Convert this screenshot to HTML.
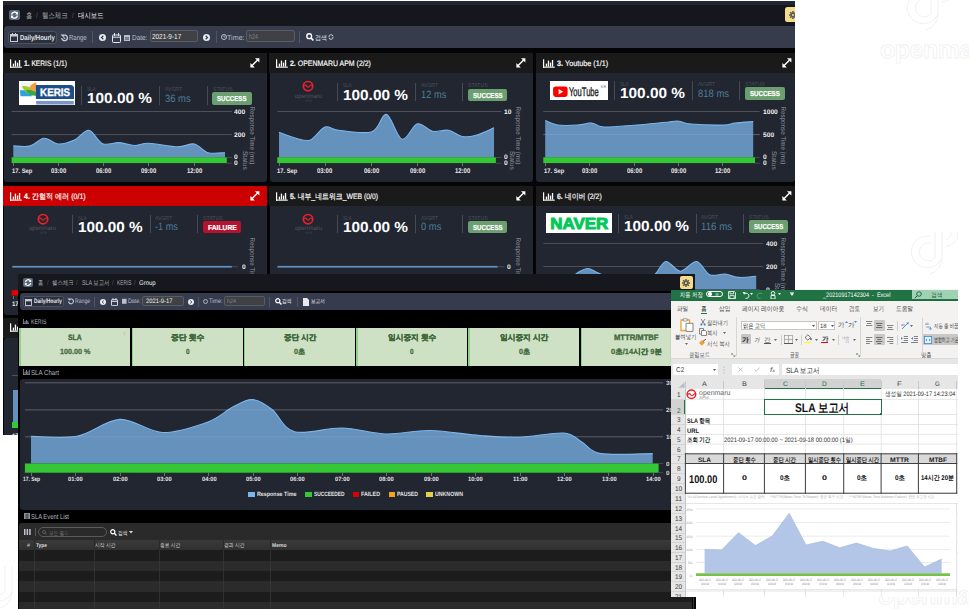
<!DOCTYPE html>
<html><head><meta charset="utf-8"><title>SLA</title>
<style>
*{margin:0;padding:0;box-sizing:border-box}
html,body{width:969px;height:609px;overflow:hidden;background:#fff}
body{position:relative;font-family:"Liberation Sans",sans-serif;text-rendering:geometricPrecision}
.a{position:absolute;display:block}
.t{position:absolute;white-space:nowrap;line-height:1}
.o{transform-origin:0 50%}
</style></head><body>
<svg class="a" style="left:904.00px;top:-12.00px;" width="50" height="48" viewBox="0 0 50 48"><g transform="scale(1.0)" fill="none" stroke="#eeeeee" stroke-width="0.9"><path d="M22,4 A16,16 0 1 0 34,26 V0"/><path d="M22,11 A9,9 0 1 0 27,26 V0"/><path d="M27,0 V-2 M34,26 A16,16 0 0 1 22,42"/><path d="M38,14 A12,12 0 0 0 38,-10"/><path d="M38,7 A5,5 0 0 0 38,-3"/></g></svg>
<div class="t" style="left:880px;top:38px;font-size:25px;font-weight:700;color:transparent;-webkit-text-stroke:0.8px #f0f0f0;letter-spacing:-0.5px">openmaru</div>
<svg class="a" style="left:908.00px;top:232.00px;" width="50" height="48" viewBox="0 0 50 48"><g transform="scale(1.0)" fill="none" stroke="#eeeeee" stroke-width="0.9"><path d="M22,4 A16,16 0 1 0 34,26 V0"/><path d="M22,11 A9,9 0 1 0 27,26 V0"/><path d="M27,0 V-2 M34,26 A16,16 0 0 1 22,42"/><path d="M38,14 A12,12 0 0 0 38,-10"/><path d="M38,7 A5,5 0 0 0 38,-3"/></g></svg>
<div class="t" style="left:878px;top:584px;font-size:25px;font-weight:700;color:transparent;-webkit-text-stroke:0.8px #f0f0f0;letter-spacing:-0.5px">openmaru</div>
<svg class="a" style="left:-22.00px;top:566.00px;" width="50" height="48" viewBox="0 0 50 48"><g transform="scale(1.0)" fill="none" stroke="#eeeeee" stroke-width="0.9"><path d="M22,4 A16,16 0 1 0 34,26 V0"/><path d="M22,11 A9,9 0 1 0 27,26 V0"/><path d="M27,0 V-2 M34,26 A16,16 0 0 1 22,42"/><path d="M38,14 A12,12 0 0 0 38,-10"/><path d="M38,7 A5,5 0 0 0 38,-3"/></g></svg>
<div class="a" style="left:0;top:0;width:795px;height:435px;overflow:hidden">
<div class="a" style="left:3.00px;top:1.00px;width:792.00px;height:434.00px;background:#050507;"></div>
<div class="a" style="left:3.00px;top:1.00px;width:792.00px;height:25.00px;background:#15171c;"></div>
<div class="a" style="left:3.00px;top:1.00px;width:792.00px;height:3.70px;background:#222630;"></div>
<div class="a" style="left:9.00px;top:9.50px;width:11.00px;height:10.20px;background:#5c667a;border-radius:2px;"></div>
<svg class="a" style="left:9.00px;top:9.50px;" width="11" height="10" viewBox="0 0 11 10"><g fill="none" stroke="#fff" stroke-width="1.3"><path d="M2.6,4.6 A3,3 0 0 1 8.2,3.6"/><path d="M8.4,5.6 A3,3 0 0 1 2.8,6.6"/></g><path d="M9,1.8 L9,4.6 L6.3,4.4 Z" fill="#fff"/><path d="M2,8.4 L2,5.6 L4.7,5.8 Z" fill="#fff"/></svg>
<div class="t o" style="left:26.00px;top:11.67px;font-size:7.6px;color:#a6abb3;transform:scaleX(1.088);--w:6.20;">홈</div>
<div class="t o" style="left:35.50px;top:11.67px;font-size:7.6px;color:#5b606a;transform:scaleX(0.853);--w:1.80;">/</div>
<div class="t o" style="left:42.00px;top:11.67px;font-size:7.6px;color:#a6abb3;transform:scaleX(1.127);--w:25.70;">헬스체크</div>
<div class="t o" style="left:71.50px;top:11.67px;font-size:7.6px;color:#5b606a;transform:scaleX(0.853);--w:1.80;">/</div>
<div class="t o" style="left:77.60px;top:11.67px;font-size:7.6px;color:#eceef2;transform:scaleX(1.123);--w:25.60;">대시보드</div>
<div class="a" style="left:785.10px;top:6.90px;width:10.00px;height:15.30px;background:#f5dc8a;border-radius:2.5px 0 0 2.5px;"></div>
<svg class="a" style="left:789.20px;top:10.90px;" width="8" height="8" viewBox="0 0 8 8"><rect x="3.25" y="0" width="1.5" height="2.40" fill="#5a5a5a" transform="rotate(0 4.0 4.0)"/><rect x="3.25" y="0" width="1.5" height="2.40" fill="#5a5a5a" transform="rotate(45 4.0 4.0)"/><rect x="3.25" y="0" width="1.5" height="2.40" fill="#5a5a5a" transform="rotate(90 4.0 4.0)"/><rect x="3.25" y="0" width="1.5" height="2.40" fill="#5a5a5a" transform="rotate(135 4.0 4.0)"/><rect x="3.25" y="0" width="1.5" height="2.40" fill="#5a5a5a" transform="rotate(180 4.0 4.0)"/><rect x="3.25" y="0" width="1.5" height="2.40" fill="#5a5a5a" transform="rotate(225 4.0 4.0)"/><rect x="3.25" y="0" width="1.5" height="2.40" fill="#5a5a5a" transform="rotate(270 4.0 4.0)"/><rect x="3.25" y="0" width="1.5" height="2.40" fill="#5a5a5a" transform="rotate(315 4.0 4.0)"/><circle cx="4.0" cy="4.0" r="2.40" fill="#5a5a5a"/><circle cx="4.0" cy="4.0" r="1.04" fill="#f5dc8a"/></svg>
<div class="a" style="left:4.30px;top:26.10px;width:790.70px;height:21.60px;background:#363c4c;border-radius:3px 0 0 3px;"></div>
<div class="a" style="left:7.50px;top:30.80px;width:49.00px;height:13.00px;background:#2b303c;border:1px solid #4b5162;border-radius:3px;"></div>
<svg class="a" style="left:9.80px;top:32.60px;" width="8" height="9" viewBox="0 0 8 9"><g fill="none" stroke="#c9cdd6" stroke-width="1"><rect x="0.5" y="1.5" width="7" height="7"/></g><rect x="0.5" y="1.5" width="7" height="2" fill="#c9cdd6"/><rect x="2" y="0" width="1" height="2" fill="#c9cdd6"/><rect x="5" y="0" width="1" height="2" fill="#c9cdd6"/></svg>
<div class="t o" style="left:19.50px;top:33.67px;font-size:7.3px;color:#e4e7ee;transform:scaleX(0.815);--w:34.70;font-weight:700;">Daily/Hourly</div>
<svg class="a" style="left:60.00px;top:33.50px;" width="8" height="8" viewBox="0 0 8 8"><path d="M1.8,4 A2.8,2.8 0 1 0 3,1.6" fill="none" stroke="#c9cdd6" stroke-width="1.3"/><path d="M0.4,0.6 L3.8,0.6 L3.6,3.6 Z" fill="#c9cdd6"/><path d="M4,2.6 V4.3 H5.4" fill="none" stroke="#c9cdd6" stroke-width="0.9"/></svg>
<div class="t o" style="left:69.00px;top:33.67px;font-size:7.3px;color:#b9bec8;transform:scaleX(0.823);--w:17.70;">Range</div>
<div class="a" style="left:92.20px;top:31.00px;width:0.90px;height:12.00px;background:#4f5566;"></div>
<svg class="a" style="left:99.20px;top:34.20px;" width="7" height="7" viewBox="0 0 7 7"><circle cx="3.5" cy="3.5" r="3.5" fill="#e9ebf0"/><path d="M4.3,1.8 L2.5,3.5 L4.3,5.2" fill="none" stroke="#363c4c" stroke-width="1.2"/></svg>
<svg class="a" style="left:112.00px;top:32.60px;" width="9" height="10" viewBox="0 0 9 10"><g fill="none" stroke="#e6e8ee" stroke-width="1"><rect x="0.5" y="2" width="8" height="7.5" rx="0.8"/><path d="M2.5,0 V3 M6.5,0 V3 M0.5,4.2 H8.5"/></g></svg>
<svg class="a" style="left:124.40px;top:33.80px;" width="6" height="7" viewBox="0 0 6 7"><rect x="0" y="1" width="6" height="6" fill="#b9bec8"/><rect x="1" y="3" width="4" height="3" fill="#363c4c" opacity="0.5"/></svg>
<div class="t o" style="left:132.30px;top:33.67px;font-size:7.3px;color:#b9bec8;transform:scaleX(0.883);--w:15.40;">Date:</div>
<div class="a" style="left:149.60px;top:30.10px;width:48.20px;height:11.70px;background:#3f4145;border:1px solid #5a5c62;border-radius:2px;"></div>
<div class="t o" style="left:151.90px;top:32.97px;font-size:7.3px;color:#eceef0;transform:scaleX(0.877);--w:29.20;">2021-9-17</div>
<svg class="a" style="left:202.80px;top:33.80px;" width="7" height="7" viewBox="0 0 7 7"><circle cx="3.5" cy="3.5" r="3.5" fill="#e9ebf0"/><path d="M2.7,1.8 L4.5,3.5 L2.7,5.2" fill="none" stroke="#363c4c" stroke-width="1.2"/></svg>
<div class="a" style="left:215.70px;top:31.00px;width:0.90px;height:12.00px;background:#4f5566;"></div>
<svg class="a" style="left:221.00px;top:34.20px;" width="6" height="6" viewBox="0 0 6 6"><circle cx="3" cy="3" r="2.5" fill="none" stroke="#b9bec8" stroke-width="1"/><path d="M3,1.5 V3 H4.3" fill="none" stroke="#b9bec8" stroke-width="0.8"/></svg>
<div class="t o" style="left:227.00px;top:33.67px;font-size:7.3px;color:#b9bec8;transform:scaleX(0.979);--w:17.60;">Time:</div>
<div class="a" style="left:246.00px;top:30.10px;width:48.80px;height:11.70px;background:#3f4145;border:1px solid #5a5c62;border-radius:2px;"></div>
<div class="t o" style="left:248.80px;top:32.97px;font-size:7.3px;color:#7d8087;transform:scaleX(0.731);--w:8.90;">h24</div>
<div class="a" style="left:298.80px;top:31.00px;width:0.90px;height:12.00px;background:#4f5566;"></div>
<svg class="a" style="left:305.80px;top:33.20px;" width="8" height="8" viewBox="0 0 8 8"><circle cx="3.2" cy="3.2" r="2.4" fill="none" stroke="#fff" stroke-width="1.4"/><path d="M4.9,4.9 L7.4,7.4" stroke="#fff" stroke-width="1.6"/></svg>
<div class="t o" style="left:314.90px;top:35.67px;font-size:6.6px;color:#e8eaee;transform:scaleX(1.212);--w:12.00;">검색</div>
<svg class="a" style="left:328.00px;top:34.00px;" width="6" height="6" viewBox="0 0 6 6"><path d="M1,3 A2,2 0 0 1 5,2.4 M5,3 A2,2 0 0 1 1,3.6" fill="none" stroke="#c9cdd6" stroke-width="1"/></svg>
<div class="a" style="left:3.00px;top:52.60px;width:264.00px;height:20.20px;background:#1a1a1a;"></div>
<div class="a" style="left:3.50px;top:72.80px;width:263.00px;height:109.70px;background:#222631;border-radius:0 0 3px 3px;"></div>
<div class="a" style="left:269.00px;top:52.60px;width:264.00px;height:20.20px;background:#1a1a1a;"></div>
<div class="a" style="left:269.50px;top:72.80px;width:263.00px;height:109.70px;background:#222631;border-radius:0 0 3px 3px;"></div>
<div class="a" style="left:535.50px;top:52.60px;width:259.50px;height:20.20px;background:#1a1a1a;"></div>
<div class="a" style="left:536.00px;top:72.80px;width:258.50px;height:109.70px;background:#222631;border-radius:0 0 3px 3px;"></div>
<svg class="a" style="left:10.00px;top:58.60px;" width="12" height="9" viewBox="0 0 12 9"><g fill="#fff"><rect x="0" y="0.3" width="1.2" height="8.4"/><rect x="0" y="7.6" width="11.8" height="1.1"/><rect x="2.8" y="4.6" width="1.3" height="3"/><rect x="4.8" y="1.6" width="1.3" height="6"/><rect x="6.9" y="3.6" width="1.3" height="4"/><rect x="8.9" y="1" width="1.3" height="6.6"/></g></svg>
<div class="t o" style="left:24.30px;top:59.87px;font-size:7.9px;color:#f4f4f4;transform:scaleX(0.842);-webkit-text-stroke:0.2px #f4f4f4;--w:42.90;"><b>1. </b>KERIS (1/1)</div>
<svg class="a" style="left:276.00px;top:58.60px;" width="12" height="9" viewBox="0 0 12 9"><g fill="#fff"><rect x="0" y="0.3" width="1.2" height="8.4"/><rect x="0" y="7.6" width="11.8" height="1.1"/><rect x="2.8" y="4.6" width="1.3" height="3"/><rect x="4.8" y="1.6" width="1.3" height="6"/><rect x="6.9" y="3.6" width="1.3" height="4"/><rect x="8.9" y="1" width="1.3" height="6.6"/></g></svg>
<div class="t o" style="left:290.30px;top:59.87px;font-size:7.9px;color:#f4f4f4;transform:scaleX(0.882);-webkit-text-stroke:0.2px #f4f4f4;--w:80.90;"><b>2. </b>OPENMARU APM (2/2)</div>
<svg class="a" style="left:542.50px;top:58.60px;" width="12" height="9" viewBox="0 0 12 9"><g fill="#fff"><rect x="0" y="0.3" width="1.2" height="8.4"/><rect x="0" y="7.6" width="11.8" height="1.1"/><rect x="2.8" y="4.6" width="1.3" height="3"/><rect x="4.8" y="1.6" width="1.3" height="6"/><rect x="6.9" y="3.6" width="1.3" height="4"/><rect x="8.9" y="1" width="1.3" height="6.6"/></g></svg>
<div class="t o" style="left:556.80px;top:59.87px;font-size:7.9px;color:#f4f4f4;transform:scaleX(0.916);-webkit-text-stroke:0.2px #f4f4f4;--w:51.20;"><b>3. </b>Youtube (1/1)</div>
<svg class="a" style="left:250.20px;top:58.20px;" width="10" height="10" viewBox="0 0 10 10"><g fill="#fff"><path d="M9.4,0.2 L9.4,4.6 L5,0.2 Z"/><path d="M0.4,9.4 L0.4,5 L4.8,9.4 Z"/><path d="M7.4,1.2 L8.4,2.2 L2.4,8.2 L1.4,7.2 Z"/></g></svg>
<svg class="a" style="left:516.40px;top:58.20px;" width="10" height="10" viewBox="0 0 10 10"><g fill="#fff"><path d="M9.4,0.2 L9.4,4.6 L5,0.2 Z"/><path d="M0.4,9.4 L0.4,5 L4.8,9.4 Z"/><path d="M7.4,1.2 L8.4,2.2 L2.4,8.2 L1.4,7.2 Z"/></g></svg>
<svg class="a" style="left:782.00px;top:58.20px;" width="10" height="10" viewBox="0 0 10 10"><g fill="#fff"><path d="M9.4,0.2 L9.4,4.6 L5,0.2 Z"/><path d="M0.4,9.4 L0.4,5 L4.8,9.4 Z"/><path d="M7.4,1.2 L8.4,2.2 L2.4,8.2 L1.4,7.2 Z"/></g></svg>
<div class="a" style="left:18.90px;top:80.90px;width:56.10px;height:24.00px;background:#fff;"></div>
<svg class="a" style="left:18.90px;top:80.90px;" width="57" height="25" viewBox="0 0 57 25"><rect x="1.5" y="1.2" width="15.5" height="12.5" rx="2" fill="#f2f4f2"/><path d="M0.8,9.2 H11 L13,15.2 H1.5 Z" fill="#2aa3dc"/><path d="M3,5.2 C7,4.6 11,6 13.5,9 L12.5,13.6 C8.5,13.5 5,10 3,5.2Z" fill="#9ccc2e"/><path d="M6.5,9.5 C10,8.6 14,9.2 17,11 L17,14.8 C12.5,15 9,13 6.5,9.5Z" fill="#3aa845"/><path d="M10.2,6.5 C12,3.5 14.5,1.8 17.3,1.2 L17.3,10.5 C14,10.2 11.5,9 10.2,6.5Z" fill="#f0a040"/><path d="M16.9,4.1 H51.5 Q55,4.1 55,7.6 V17.9 H16.9 Z" fill="#1c4f8a"/><text x="36.1" y="15" text-anchor="middle" font-family="Liberation Sans" font-weight="700" font-size="11" fill="#fff" stroke="#fff" stroke-width="0.35" textLength="30" lengthAdjust="spacingAndGlyphs">KERIS</text><rect x="17.2" y="19.9" width="37.6" height="3.6" fill="#5a7bb8" opacity="0.8"/></svg>
<div class="a" style="left:81.10px;top:86.00px;width:1.10px;height:19.00px;background:#454a55;"></div>
<div class="a" style="left:159.10px;top:86.00px;width:1.10px;height:19.00px;background:#454a55;"></div>
<div class="a" style="left:207.10px;top:86.00px;width:1.10px;height:19.00px;background:#454a55;"></div>
<div class="t o" style="left:87.40px;top:88.01px;font-size:5.8px;color:#4b505b;transform:scaleX(0.794);--w:8.70;">SLA</div>
<div class="t o" style="left:164.70px;top:88.01px;font-size:5.8px;color:#4b505b;transform:scaleX(0.874);--w:17.00;">AVGRT</div>
<div class="t o" style="left:212.70px;top:88.01px;font-size:5.8px;color:#4b505b;transform:scaleX(0.890);--w:19.60;">STATUS</div>
<div class="t o" style="left:87.40px;top:92.18px;font-size:14.6px;color:#fff;transform:scaleX(1.054);--w:65.00;font-weight:700;">100.00 %</div>
<div class="t o" style="left:164.70px;top:93.67px;font-size:10.6px;color:#4c7f98;transform:scaleX(0.890);--w:25.70;">36 ms</div>
<div class="a" style="left:212.40px;top:91.90px;width:39.30px;height:13.00px;background:#6b9f6f;border-radius:2px;"></div>
<div class="t o" style="left:217.31px;top:95.27px;font-size:7.2px;color:#fff;transform:scaleX(0.847);--w:29.47;font-weight:700;-webkit-text-stroke:0.2px #fff;">SUCCESS</div>
<svg class="a" style="left:302.40px;top:80.10px;" width="13" height="13" viewBox="0 0 13 13"><g transform="scale(1.0)"><circle cx="6" cy="6.2" r="4.7" fill="none" stroke="#e8212b" stroke-width="1.7"/><path d="M2.3,6 C3.1,4.9 3.9,4.8 4.6,5.9 S6.6,7.9 7.6,6.3 S9.1,4.9 9.8,5.5" fill="none" stroke="#e8212b" stroke-width="1.1"/></g></svg>
<div class="t o" style="left:294.80px;top:93.67px;font-size:6.2px;color:#50555e;transform:scaleX(0.974);--w:27.20;">openmaru</div>
<div class="t o" style="left:305.00px;top:99.52px;font-size:3.6px;color:#40444c;transform:scaleX(0.872);--w:6.80;">APM</div>
<div class="a" style="left:336.80px;top:82.50px;width:1.10px;height:18.80px;background:#454a55;"></div>
<div class="a" style="left:415.00px;top:82.50px;width:1.10px;height:18.80px;background:#454a55;"></div>
<div class="a" style="left:462.00px;top:82.50px;width:1.10px;height:18.80px;background:#454a55;"></div>
<div class="t o" style="left:343.10px;top:84.41px;font-size:5.8px;color:#4b505b;transform:scaleX(0.794);--w:8.70;">SLA</div>
<div class="t o" style="left:420.60px;top:84.41px;font-size:5.8px;color:#4b505b;transform:scaleX(0.874);--w:17.00;">AVGRT</div>
<div class="t o" style="left:467.60px;top:84.41px;font-size:5.8px;color:#4b505b;transform:scaleX(0.890);--w:19.60;">STATUS</div>
<div class="t o" style="left:343.10px;top:88.58px;font-size:14.6px;color:#fff;transform:scaleX(1.052);--w:64.90;font-weight:700;">100.00 %</div>
<div class="t o" style="left:420.60px;top:90.07px;font-size:10.6px;color:#4c7f98;transform:scaleX(0.877);--w:25.30;">12 ms</div>
<div class="a" style="left:468.00px;top:88.70px;width:39.40px;height:12.60px;background:#6b9f6f;border-radius:2px;"></div>
<div class="t o" style="left:472.93px;top:91.67px;font-size:7.2px;color:#fff;transform:scaleX(0.849);--w:29.55;font-weight:700;-webkit-text-stroke:0.2px #fff;">SUCCESS</div>
<div class="a" style="left:549.50px;top:81.30px;width:58.40px;height:18.70px;background:#fff;"></div>
<svg class="a" style="left:549.50px;top:81.30px;" width="59" height="19" viewBox="0 0 59 19"><rect x="3.1" y="5.6" width="14.5" height="10.3" rx="2.8" fill="#ff0000"/><path d="M8.6,8 L13.2,10.7 L8.6,13.4Z" fill="#fff"/><text x="19" y="14.9" font-family="Liberation Sans" font-size="12.3" fill="#1a1a1a" stroke="#1a1a1a" stroke-width="0.35" textLength="29.8" lengthAdjust="spacingAndGlyphs">YouTube</text><text x="50.8" y="7.3" font-family="Liberation Sans" font-size="3.9" fill="#777">KR</text></svg>
<div class="a" style="left:614.00px;top:81.00px;width:1.10px;height:19.00px;background:#454a55;"></div>
<div class="a" style="left:692.00px;top:81.00px;width:1.10px;height:19.00px;background:#454a55;"></div>
<div class="a" style="left:739.40px;top:81.00px;width:1.10px;height:19.00px;background:#454a55;"></div>
<div class="t o" style="left:620.30px;top:83.01px;font-size:5.8px;color:#4b505b;transform:scaleX(0.794);--w:8.70;">SLA</div>
<div class="t o" style="left:697.60px;top:83.01px;font-size:5.8px;color:#4b505b;transform:scaleX(0.874);--w:17.00;">AVGRT</div>
<div class="t o" style="left:745.00px;top:83.01px;font-size:5.8px;color:#4b505b;transform:scaleX(0.890);--w:19.60;">STATUS</div>
<div class="t o" style="left:620.30px;top:87.18px;font-size:14.6px;color:#fff;transform:scaleX(1.054);--w:65.00;font-weight:700;">100.00 %</div>
<div class="t o" style="left:697.60px;top:88.67px;font-size:10.6px;color:#4c7f98;transform:scaleX(0.892);--w:31.00;">818 ms</div>
<div class="a" style="left:745.30px;top:86.80px;width:39.70px;height:13.10px;background:#6b9f6f;border-radius:2px;"></div>
<div class="t o" style="left:750.26px;top:90.27px;font-size:7.2px;color:#fff;transform:scaleX(0.855);--w:29.78;font-weight:700;-webkit-text-stroke:0.2px #fff;">SUCCESS</div>
<svg class="a" style="left:0;top:0" width="969" height="609"><rect x="11.6" y="111.0" width="220.3" height="1" fill="#4e5159"/><rect x="11.6" y="134.1" width="220.3" height="1" fill="#4e5159"/><path d="M13.30,145.90 C16.13,145.90 25.18,147.18 30.30,145.90 C35.42,144.62 39.30,138.52 44.00,138.20 C48.70,137.88 53.33,143.75 58.50,144.00 C63.67,144.25 69.93,141.98 75.00,139.70 C80.07,137.42 84.30,129.63 88.90,130.30 C93.50,130.97 97.55,141.65 102.60,143.70 C107.65,145.75 113.90,142.30 119.20,142.60 C124.50,142.90 129.47,145.38 134.40,145.50 C139.33,145.62 141.58,143.07 148.80,143.30 C156.02,143.53 170.12,146.78 177.70,146.90 C185.28,147.02 189.25,143.03 194.30,144.00 C199.35,144.97 202.88,151.25 208.00,152.70 C213.12,154.15 222.17,152.70 225.00,152.70 L225.00,157.50 L13.30,157.50 Z" fill="#6591bd"/><path d="M13.30,145.90 C16.13,145.90 25.18,147.18 30.30,145.90 C35.42,144.62 39.30,138.52 44.00,138.20 C48.70,137.88 53.33,143.75 58.50,144.00 C63.67,144.25 69.93,141.98 75.00,139.70 C80.07,137.42 84.30,129.63 88.90,130.30 C93.50,130.97 97.55,141.65 102.60,143.70 C107.65,145.75 113.90,142.30 119.20,142.60 C124.50,142.90 129.47,145.38 134.40,145.50 C139.33,145.62 141.58,143.07 148.80,143.30 C156.02,143.53 170.12,146.78 177.70,146.90 C185.28,147.02 189.25,143.03 194.30,144.00 C199.35,144.97 202.88,151.25 208.00,152.70 C213.12,154.15 222.17,152.70 225.00,152.70" fill="none" stroke="#7cb5ec" stroke-width="1.1"/><rect x="11.6" y="157.3" width="215.2" height="5.8" fill="#34c934"/><rect x="226.8" y="157" width="5" height="0.8" fill="#4e5159"/><rect x="226.8" y="162.8" width="5" height="0.8" fill="#4e5159"/><rect x="277.3" y="111" width="223.9" height="1" fill="#4e5159"/><path d="M279.00,132.20 C281.83,133.20 290.75,136.90 296.00,138.20 C301.25,139.50 305.67,141.87 310.50,140.00 C315.33,138.13 320.30,128.62 325.00,127.00 C329.70,125.38 330.87,129.52 338.70,130.30 C346.53,131.08 364.05,134.35 372.00,131.70 C379.95,129.05 381.40,113.15 386.40,114.40 C391.40,115.65 396.83,137.63 402.00,139.20 C407.17,140.77 412.30,125.12 417.40,123.80 C422.50,122.48 427.42,130.22 432.60,131.30 C437.78,132.38 443.57,129.43 448.50,130.30 C453.43,131.17 457.62,135.67 462.20,136.50 C466.78,137.33 470.70,136.75 476.00,135.30 C481.30,133.85 491.00,129.05 494.00,127.80 L494.00,157.50 L279.00,157.50 Z" fill="#6591bd"/><path d="M279.00,132.20 C281.83,133.20 290.75,136.90 296.00,138.20 C301.25,139.50 305.67,141.87 310.50,140.00 C315.33,138.13 320.30,128.62 325.00,127.00 C329.70,125.38 330.87,129.52 338.70,130.30 C346.53,131.08 364.05,134.35 372.00,131.70 C379.95,129.05 381.40,113.15 386.40,114.40 C391.40,115.65 396.83,137.63 402.00,139.20 C407.17,140.77 412.30,125.12 417.40,123.80 C422.50,122.48 427.42,130.22 432.60,131.30 C437.78,132.38 443.57,129.43 448.50,130.30 C453.43,131.17 457.62,135.67 462.20,136.50 C466.78,137.33 470.70,136.75 476.00,135.30 C481.30,133.85 491.00,129.05 494.00,127.80" fill="none" stroke="#7cb5ec" stroke-width="1.1"/><rect x="277.3" y="157.3" width="218.6" height="5.8" fill="#34c934"/><rect x="495.9" y="157" width="5.3" height="0.8" fill="#4e5159"/><rect x="495.9" y="162.8" width="5.3" height="0.8" fill="#4e5159"/><rect x="543.3" y="111.0" width="216.4" height="1" fill="#4e5159"/><rect x="543.3" y="134.1" width="216.4" height="1" fill="#4e5159"/><path d="M545.20,120.60 C547.25,121.33 552.08,124.27 557.50,125.00 C562.92,125.73 572.42,125.33 577.70,125.00 C582.98,124.67 586.55,123.25 589.20,123.00 C591.85,122.75 591.18,122.83 593.60,123.50 C596.02,124.17 596.97,126.72 603.70,127.00 C610.43,127.28 623.17,126.03 634.00,125.20 C644.83,124.37 661.23,122.67 668.70,122.00 C676.17,121.33 675.08,120.87 678.80,121.20 C682.52,121.53 683.53,123.37 691.00,124.00 C698.47,124.63 716.27,125.17 723.60,125.00 C730.93,124.83 730.07,123.57 735.00,123.00 C739.93,122.43 750.17,121.83 753.20,121.60 L753.20,157.50 L545.20,157.50 Z" fill="#6591bd"/><path d="M545.20,120.60 C547.25,121.33 552.08,124.27 557.50,125.00 C562.92,125.73 572.42,125.33 577.70,125.00 C582.98,124.67 586.55,123.25 589.20,123.00 C591.85,122.75 591.18,122.83 593.60,123.50 C596.02,124.17 596.97,126.72 603.70,127.00 C610.43,127.28 623.17,126.03 634.00,125.20 C644.83,124.37 661.23,122.67 668.70,122.00 C676.17,121.33 675.08,120.87 678.80,121.20 C682.52,121.53 683.53,123.37 691.00,124.00 C698.47,124.63 716.27,125.17 723.60,125.00 C730.93,124.83 730.07,123.57 735.00,123.00 C739.93,122.43 750.17,121.83 753.20,121.60" fill="none" stroke="#7cb5ec" stroke-width="1.1"/><rect x="543.3" y="134.1" width="216.4" height="1" fill="#fff" opacity="0.1"/><rect x="543.3" y="157.3" width="211.7" height="5.8" fill="#34c934"/><rect x="755" y="157" width="4.7" height="0.8" fill="#4e5159"/><rect x="755" y="162.8" width="4.7" height="0.8" fill="#4e5159"/></svg>
<div class="a" style="left:12.90px;top:163.10px;width:0.80px;height:3.00px;background:#6b6f78;"></div>
<div class="t o" style="left:11.70px;top:168.87px;font-size:6.6px;color:#e8e8e8;transform:scaleX(0.878);--w:20.30;font-weight:700;">17. Sep</div>
<div class="a" style="left:58.10px;top:163.10px;width:0.80px;height:3.00px;background:#6b6f78;"></div>
<div class="t o" style="left:50.90px;top:168.87px;font-size:6.8px;color:#e8e8e8;transform:scaleX(0.874);--w:15.20;font-weight:700;">03:00</div>
<div class="a" style="left:103.10px;top:163.10px;width:0.80px;height:3.00px;background:#6b6f78;"></div>
<div class="t o" style="left:95.90px;top:168.87px;font-size:6.8px;color:#e8e8e8;transform:scaleX(0.874);--w:15.20;font-weight:700;">06:00</div>
<div class="a" style="left:148.40px;top:163.10px;width:0.80px;height:3.00px;background:#6b6f78;"></div>
<div class="t o" style="left:141.20px;top:168.87px;font-size:6.8px;color:#e8e8e8;transform:scaleX(0.874);--w:15.20;font-weight:700;">09:00</div>
<div class="a" style="left:193.90px;top:163.10px;width:0.80px;height:3.00px;background:#6b6f78;"></div>
<div class="t o" style="left:186.70px;top:168.87px;font-size:6.8px;color:#e8e8e8;transform:scaleX(0.874);--w:15.20;font-weight:700;">12:00</div>
<div class="a" style="left:278.60px;top:163.10px;width:0.80px;height:3.00px;background:#6b6f78;"></div>
<div class="t o" style="left:277.40px;top:168.87px;font-size:6.6px;color:#e8e8e8;transform:scaleX(0.878);--w:20.30;font-weight:700;">17. Sep</div>
<div class="a" style="left:324.60px;top:163.10px;width:0.80px;height:3.00px;background:#6b6f78;"></div>
<div class="t o" style="left:317.40px;top:168.87px;font-size:6.8px;color:#e8e8e8;transform:scaleX(0.874);--w:15.20;font-weight:700;">03:00</div>
<div class="a" style="left:371.10px;top:163.10px;width:0.80px;height:3.00px;background:#6b6f78;"></div>
<div class="t o" style="left:363.90px;top:168.87px;font-size:6.8px;color:#e8e8e8;transform:scaleX(0.874);--w:15.20;font-weight:700;">06:00</div>
<div class="a" style="left:417.00px;top:163.10px;width:0.80px;height:3.00px;background:#6b6f78;"></div>
<div class="t o" style="left:409.80px;top:168.87px;font-size:6.8px;color:#e8e8e8;transform:scaleX(0.874);--w:15.20;font-weight:700;">09:00</div>
<div class="a" style="left:461.80px;top:163.10px;width:0.80px;height:3.00px;background:#6b6f78;"></div>
<div class="t o" style="left:454.60px;top:168.87px;font-size:6.8px;color:#e8e8e8;transform:scaleX(0.874);--w:15.20;font-weight:700;">12:00</div>
<div class="a" style="left:544.80px;top:163.10px;width:0.80px;height:3.00px;background:#6b6f78;"></div>
<div class="t o" style="left:543.60px;top:168.87px;font-size:6.6px;color:#e8e8e8;transform:scaleX(0.878);--w:20.30;font-weight:700;">17. Sep</div>
<div class="a" style="left:589.00px;top:163.10px;width:0.80px;height:3.00px;background:#6b6f78;"></div>
<div class="t o" style="left:581.80px;top:168.87px;font-size:6.8px;color:#e8e8e8;transform:scaleX(0.874);--w:15.20;font-weight:700;">03:00</div>
<div class="a" style="left:633.90px;top:163.10px;width:0.80px;height:3.00px;background:#6b6f78;"></div>
<div class="t o" style="left:626.70px;top:168.87px;font-size:6.8px;color:#e8e8e8;transform:scaleX(0.874);--w:15.20;font-weight:700;">06:00</div>
<div class="a" style="left:678.40px;top:163.10px;width:0.80px;height:3.00px;background:#6b6f78;"></div>
<div class="t o" style="left:671.20px;top:168.87px;font-size:6.8px;color:#e8e8e8;transform:scaleX(0.874);--w:15.20;font-weight:700;">09:00</div>
<div class="a" style="left:722.30px;top:163.10px;width:0.80px;height:3.00px;background:#6b6f78;"></div>
<div class="t o" style="left:715.10px;top:168.87px;font-size:6.8px;color:#e8e8e8;transform:scaleX(0.874);--w:15.20;font-weight:700;">12:00</div>
<div class="t o" style="left:234.00px;top:109.97px;font-size:6.6px;color:#eeeeee;transform:scaleX(1.008);--w:11.10;font-weight:700;">400</div>
<div class="t o" style="left:234.00px;top:133.07px;font-size:6.6px;color:#eeeeee;transform:scaleX(1.008);--w:11.10;font-weight:700;">200</div>
<div class="t o" style="left:234.00px;top:154.97px;font-size:6.6px;color:#eeeeee;transform:scaleX(1.008);--w:3.70;font-weight:700;">0</div>
<div class="t o" style="left:234.00px;top:160.67px;font-size:6.6px;color:#eeeeee;transform:scaleX(1.008);--w:3.70;font-weight:700;">0</div>
<div class="t o" style="left:503.70px;top:109.97px;font-size:6.6px;color:#eeeeee;transform:scaleX(1.008);--w:7.40;font-weight:700;">10</div>
<div class="t o" style="left:503.70px;top:154.97px;font-size:6.6px;color:#eeeeee;transform:scaleX(1.008);--w:3.70;font-weight:700;">0</div>
<div class="t o" style="left:503.70px;top:160.67px;font-size:6.6px;color:#eeeeee;transform:scaleX(1.008);--w:3.70;font-weight:700;">0</div>
<div class="t o" style="left:762.90px;top:109.97px;font-size:6.6px;color:#eeeeee;transform:scaleX(1.008);--w:14.80;font-weight:700;">1000</div>
<div class="t o" style="left:762.90px;top:133.07px;font-size:6.6px;color:#eeeeee;transform:scaleX(1.008);--w:11.10;font-weight:700;">500</div>
<div class="t o" style="left:762.90px;top:154.97px;font-size:6.6px;color:#eeeeee;transform:scaleX(1.008);--w:3.70;font-weight:700;">0</div>
<div class="t o" style="left:762.90px;top:160.67px;font-size:6.6px;color:#eeeeee;transform:scaleX(1.008);--w:3.70;font-weight:700;">0</div>
<div class="t" style="left:50.70px;top:131.60px;width:400px;text-align:center;font-size:6.8px;line-height:6.8px;color:#8e939c;transform:rotate(90deg) scaleX(0.925);">Response Time (ms)</div>
<div class="t" style="left:44.00px;top:156.60px;width:400px;text-align:center;font-size:6.8px;line-height:6.8px;color:#8e939c;transform:rotate(90deg) scaleX(0.986);">Status</div>
<div class="t" style="left:316.50px;top:131.60px;width:400px;text-align:center;font-size:6.8px;line-height:6.8px;color:#8e939c;transform:rotate(90deg) scaleX(0.925);">Response Time (ms)</div>
<div class="t" style="left:310.50px;top:156.60px;width:400px;text-align:center;font-size:6.8px;line-height:6.8px;color:#8e939c;transform:rotate(90deg) scaleX(0.986);">Status</div>
<div class="t" style="left:582.20px;top:131.60px;width:400px;text-align:center;font-size:6.8px;line-height:6.8px;color:#8e939c;transform:rotate(90deg) scaleX(0.925);">Response Time (ms)</div>
<div class="t" style="left:573.40px;top:156.60px;width:400px;text-align:center;font-size:6.8px;line-height:6.8px;color:#8e939c;transform:rotate(90deg) scaleX(0.986);">Status</div>
<div class="a" style="left:3.00px;top:185.50px;width:264.00px;height:20.20px;background:#cc0000;"></div>
<div class="a" style="left:3.50px;top:205.70px;width:263.00px;height:109.70px;background:#222631;border-radius:0 0 3px 3px;"></div>
<div class="a" style="left:269.00px;top:185.50px;width:264.00px;height:20.20px;background:#1a1a1a;"></div>
<div class="a" style="left:269.50px;top:205.70px;width:263.00px;height:109.70px;background:#222631;border-radius:0 0 3px 3px;"></div>
<div class="a" style="left:535.50px;top:185.50px;width:259.50px;height:20.20px;background:#1a1a1a;"></div>
<div class="a" style="left:536.00px;top:205.70px;width:258.50px;height:109.70px;background:#222631;border-radius:0 0 3px 3px;"></div>
<svg class="a" style="left:10.00px;top:191.50px;" width="12" height="9" viewBox="0 0 12 9"><g fill="#fff"><rect x="0" y="0.3" width="1.2" height="8.4"/><rect x="0" y="7.6" width="11.8" height="1.1"/><rect x="2.8" y="4.6" width="1.3" height="3"/><rect x="4.8" y="1.6" width="1.3" height="6"/><rect x="6.9" y="3.6" width="1.3" height="4"/><rect x="8.9" y="1" width="1.3" height="6.6"/></g></svg>
<div class="t o" style="left:24.30px;top:192.77px;font-size:7.9px;color:#f4f4f4;transform:scaleX(1.045);-webkit-text-stroke:0.2px #f4f4f4;--w:61.70;"><b>4. </b>간헐적 에러 (0/1)</div>
<svg class="a" style="left:276.00px;top:191.50px;" width="12" height="9" viewBox="0 0 12 9"><g fill="#fff"><rect x="0" y="0.3" width="1.2" height="8.4"/><rect x="0" y="7.6" width="11.8" height="1.1"/><rect x="2.8" y="4.6" width="1.3" height="3"/><rect x="4.8" y="1.6" width="1.3" height="6"/><rect x="6.9" y="3.6" width="1.3" height="4"/><rect x="8.9" y="1" width="1.3" height="6.6"/></g></svg>
<div class="t o" style="left:290.30px;top:192.77px;font-size:7.9px;color:#f4f4f4;transform:scaleX(0.984);-webkit-text-stroke:0.2px #f4f4f4;--w:88.10;"><b>5. </b>내부_네트워크_WEB (0/0)</div>
<svg class="a" style="left:542.50px;top:191.50px;" width="12" height="9" viewBox="0 0 12 9"><g fill="#fff"><rect x="0" y="0.3" width="1.2" height="8.4"/><rect x="0" y="7.6" width="11.8" height="1.1"/><rect x="2.8" y="4.6" width="1.3" height="3"/><rect x="4.8" y="1.6" width="1.3" height="6"/><rect x="6.9" y="3.6" width="1.3" height="4"/><rect x="8.9" y="1" width="1.3" height="6.6"/></g></svg>
<div class="t o" style="left:556.80px;top:192.77px;font-size:7.9px;color:#f4f4f4;transform:scaleX(0.993);-webkit-text-stroke:0.2px #f4f4f4;--w:44.70;"><b>6. </b>네이버 (2/2)</div>
<svg class="a" style="left:250.20px;top:191.20px;" width="10" height="10" viewBox="0 0 10 10"><g fill="#fff"><path d="M9.4,0.2 L9.4,4.6 L5,0.2 Z"/><path d="M0.4,9.4 L0.4,5 L4.8,9.4 Z"/><path d="M7.4,1.2 L8.4,2.2 L2.4,8.2 L1.4,7.2 Z"/></g></svg>
<svg class="a" style="left:516.40px;top:191.20px;" width="10" height="10" viewBox="0 0 10 10"><g fill="#fff"><path d="M9.4,0.2 L9.4,4.6 L5,0.2 Z"/><path d="M0.4,9.4 L0.4,5 L4.8,9.4 Z"/><path d="M7.4,1.2 L8.4,2.2 L2.4,8.2 L1.4,7.2 Z"/></g></svg>
<svg class="a" style="left:782.00px;top:191.20px;" width="10" height="10" viewBox="0 0 10 10"><g fill="#fff"><path d="M9.4,0.2 L9.4,4.6 L5,0.2 Z"/><path d="M0.4,9.4 L0.4,5 L4.8,9.4 Z"/><path d="M7.4,1.2 L8.4,2.2 L2.4,8.2 L1.4,7.2 Z"/></g></svg>
<svg class="a" style="left:37.00px;top:212.70px;" width="13" height="13" viewBox="0 0 13 13"><g transform="scale(1.0)"><circle cx="6" cy="6.2" r="4.7" fill="none" stroke="#e8212b" stroke-width="1.7"/><path d="M2.3,6 C3.1,4.9 3.9,4.8 4.6,5.9 S6.6,7.9 7.6,6.3 S9.1,4.9 9.8,5.5" fill="none" stroke="#e8212b" stroke-width="1.1"/></g></svg>
<div class="t o" style="left:29.40px;top:226.27px;font-size:6.2px;color:#50555e;transform:scaleX(0.974);--w:27.20;">openmaru</div>
<div class="t o" style="left:39.60px;top:232.12px;font-size:3.6px;color:#40444c;transform:scaleX(0.872);--w:6.80;">APM</div>
<div class="a" style="left:71.80px;top:214.70px;width:1.10px;height:18.80px;background:#454a55;"></div>
<div class="a" style="left:149.50px;top:214.70px;width:1.10px;height:18.80px;background:#454a55;"></div>
<div class="a" style="left:197.00px;top:214.70px;width:1.10px;height:18.80px;background:#454a55;"></div>
<div class="t o" style="left:78.10px;top:216.61px;font-size:5.8px;color:#4b505b;transform:scaleX(0.794);--w:8.70;">SLA</div>
<div class="t o" style="left:155.10px;top:216.61px;font-size:5.8px;color:#4b505b;transform:scaleX(0.874);--w:17.00;">AVGRT</div>
<div class="t o" style="left:202.60px;top:216.61px;font-size:5.8px;color:#4b505b;transform:scaleX(0.890);--w:19.60;">STATUS</div>
<div class="t o" style="left:78.10px;top:220.78px;font-size:14.6px;color:#fff;transform:scaleX(1.047);--w:64.60;font-weight:700;">100.00 %</div>
<div class="t o" style="left:155.10px;top:222.27px;font-size:10.6px;color:#4c7f98;transform:scaleX(0.864);--w:22.90;">-1 ms</div>
<div class="a" style="left:203.00px;top:221.20px;width:38.30px;height:12.30px;background:#b5122f;border-radius:2px;"></div>
<div class="t o" style="left:207.79px;top:223.87px;font-size:7.2px;color:#fff;transform:scaleX(0.933);--w:28.73;font-weight:700;-webkit-text-stroke:0.2px #fff;">FAILURE</div>
<svg class="a" style="left:302.40px;top:212.70px;" width="13" height="13" viewBox="0 0 13 13"><g transform="scale(1.0)"><circle cx="6" cy="6.2" r="4.7" fill="none" stroke="#e8212b" stroke-width="1.7"/><path d="M2.3,6 C3.1,4.9 3.9,4.8 4.6,5.9 S6.6,7.9 7.6,6.3 S9.1,4.9 9.8,5.5" fill="none" stroke="#e8212b" stroke-width="1.1"/></g></svg>
<div class="t o" style="left:294.80px;top:226.27px;font-size:6.2px;color:#50555e;transform:scaleX(0.974);--w:27.20;">openmaru</div>
<div class="t o" style="left:305.00px;top:232.12px;font-size:3.6px;color:#40444c;transform:scaleX(0.872);--w:6.80;">APM</div>
<div class="a" style="left:336.80px;top:214.70px;width:1.10px;height:18.80px;background:#454a55;"></div>
<div class="a" style="left:415.00px;top:214.70px;width:1.10px;height:18.80px;background:#454a55;"></div>
<div class="a" style="left:462.00px;top:214.70px;width:1.10px;height:18.80px;background:#454a55;"></div>
<div class="t o" style="left:343.10px;top:216.61px;font-size:5.8px;color:#4b505b;transform:scaleX(0.794);--w:8.70;">SLA</div>
<div class="t o" style="left:420.60px;top:216.61px;font-size:5.8px;color:#4b505b;transform:scaleX(0.874);--w:17.00;">AVGRT</div>
<div class="t o" style="left:467.60px;top:216.61px;font-size:5.8px;color:#4b505b;transform:scaleX(0.890);--w:19.60;">STATUS</div>
<div class="t o" style="left:343.10px;top:220.78px;font-size:14.6px;color:#fff;transform:scaleX(1.052);--w:64.90;font-weight:700;">100.00 %</div>
<div class="t o" style="left:420.60px;top:222.27px;font-size:10.6px;color:#4c7f98;transform:scaleX(0.888);--w:20.40;">0 ms</div>
<div class="a" style="left:468.00px;top:221.20px;width:39.40px;height:12.30px;background:#6b9f6f;border-radius:2px;"></div>
<div class="t o" style="left:472.93px;top:223.87px;font-size:7.2px;color:#fff;transform:scaleX(0.849);--w:29.55;font-weight:700;-webkit-text-stroke:0.2px #fff;">SUCCESS</div>
<div class="a" style="left:545.90px;top:213.00px;width:66.20px;height:19.70px;background:#fff;"></div>
<svg class="a" style="left:545.90px;top:213.00px;" width="67" height="20" viewBox="0 0 67 20"><text x="33.2" y="16.3" text-anchor="middle" font-family="Liberation Sans" font-weight="700" font-size="16" fill="#03c75a" stroke="#03c75a" stroke-width="1" textLength="58" lengthAdjust="spacingAndGlyphs">NAVER</text></svg>
<div class="a" style="left:617.70px;top:214.00px;width:1.10px;height:18.70px;background:#454a55;"></div>
<div class="a" style="left:695.60px;top:214.00px;width:1.10px;height:18.70px;background:#454a55;"></div>
<div class="a" style="left:743.30px;top:214.00px;width:1.10px;height:18.70px;background:#454a55;"></div>
<div class="t o" style="left:624.00px;top:215.91px;font-size:5.8px;color:#4b505b;transform:scaleX(0.794);--w:8.70;">SLA</div>
<div class="t o" style="left:701.20px;top:215.91px;font-size:5.8px;color:#4b505b;transform:scaleX(0.874);--w:17.00;">AVGRT</div>
<div class="t o" style="left:748.90px;top:215.91px;font-size:5.8px;color:#4b505b;transform:scaleX(0.890);--w:19.60;">STATUS</div>
<div class="t o" style="left:624.00px;top:220.08px;font-size:14.6px;color:#fff;transform:scaleX(1.052);--w:64.90;font-weight:700;">100.00 %</div>
<div class="t o" style="left:701.20px;top:221.57px;font-size:10.6px;color:#4c7f98;transform:scaleX(0.915);--w:31.10;">116 ms</div>
<div class="a" style="left:749.30px;top:220.20px;width:39.00px;height:12.50px;background:#6b9f6f;border-radius:2px;"></div>
<div class="t o" style="left:754.17px;top:223.07px;font-size:7.2px;color:#fff;transform:scaleX(0.840);--w:29.25;font-weight:700;-webkit-text-stroke:0.2px #fff;">SUCCESS</div>
<svg class="a" style="left:0;top:0" width="969" height="609"><rect x="12.3" y="265.9" width="219.6" height="1.7" fill="#6591bd"/><rect x="231.9" y="266.3" width="6" height="0.9" fill="#4e5159"/><rect x="277.5" y="265.9" width="220.2" height="1.7" fill="#6591bd"/><rect x="497.7" y="266.3" width="6.9" height="0.9" fill="#4e5159"/><rect x="11.6" y="290" width="7" height="5.6" fill="#dd0000"/><rect x="543.3" y="242.9" width="220" height="1" fill="#4e5159"/><rect x="543.3" y="266.0" width="220" height="1" fill="#4e5159"/><path d="M545.20,283.00 C548.50,282.67 559.40,282.83 565.00,281.00 C570.60,279.17 574.97,274.08 578.80,272.00 C582.63,269.92 584.75,268.33 588.00,268.50 C591.25,268.67 592.97,270.75 598.30,273.00 C603.63,275.25 612.22,280.67 620.00,282.00 C627.78,283.33 639.10,282.33 645.00,281.00 C650.90,279.67 651.90,277.25 655.40,274.00 C658.90,270.75 661.82,261.97 666.00,261.50 C670.18,261.03 675.40,271.20 680.50,271.20 C685.60,271.20 691.73,260.90 696.60,261.50 C701.47,262.10 704.97,272.72 709.70,274.80 C714.43,276.88 720.12,273.57 725.00,274.00 C729.88,274.43 733.80,277.03 739.00,277.40 C744.20,277.77 753.33,276.40 756.20,276.20 L756.20,289.60 L545.20,289.60 Z" fill="#6591bd"/><path d="M545.20,283.00 C548.50,282.67 559.40,282.83 565.00,281.00 C570.60,279.17 574.97,274.08 578.80,272.00 C582.63,269.92 584.75,268.33 588.00,268.50 C591.25,268.67 592.97,270.75 598.30,273.00 C603.63,275.25 612.22,280.67 620.00,282.00 C627.78,283.33 639.10,282.33 645.00,281.00 C650.90,279.67 651.90,277.25 655.40,274.00 C658.90,270.75 661.82,261.97 666.00,261.50 C670.18,261.03 675.40,271.20 680.50,271.20 C685.60,271.20 691.73,260.90 696.60,261.50 C701.47,262.10 704.97,272.72 709.70,274.80 C714.43,276.88 720.12,273.57 725.00,274.00 C729.88,274.43 733.80,277.03 739.00,277.40 C744.20,277.77 753.33,276.40 756.20,276.20" fill="none" stroke="#7cb5ec" stroke-width="1.1"/><rect x="543.3" y="290.2" width="211.7" height="5.8" fill="#34c934"/><rect x="755" y="289" width="4.7" height="0.8" fill="#4e5159"/></svg>
<div class="t o" style="left:242.30px;top:265.37px;font-size:6.6px;color:#eeeeee;transform:scaleX(1.008);--w:3.70;font-weight:700;">0</div>
<div class="t o" style="left:507.00px;top:265.37px;font-size:6.6px;color:#eeeeee;transform:scaleX(1.008);--w:3.70;font-weight:700;">0</div>
<div class="t o" style="left:11.80px;top:301.57px;font-size:6.6px;color:#e8e8e8;transform:scaleX(0.913);--w:6.70;font-weight:700;">17</div>
<div class="a" style="left:13.30px;top:295.60px;width:0.80px;height:3.00px;background:#6b6f78;"></div>
<div class="t o" style="left:766.20px;top:242.07px;font-size:6.6px;color:#eeeeee;transform:scaleX(1.008);--w:11.10;font-weight:700;">400</div>
<div class="t o" style="left:766.20px;top:265.17px;font-size:6.6px;color:#eeeeee;transform:scaleX(1.008);--w:11.10;font-weight:700;">200</div>
<div class="t o" style="left:766.20px;top:287.67px;font-size:6.6px;color:#eeeeee;transform:scaleX(1.035);--w:3.80;font-weight:700;">0</div>
<div class="t" style="left:50.70px;top:263.10px;width:400px;text-align:center;font-size:6.8px;line-height:6.8px;color:#8e939c;transform:rotate(90deg) scaleX(0.925);">Response Time (ms)</div>
<div class="t" style="left:316.50px;top:263.10px;width:400px;text-align:center;font-size:6.8px;line-height:6.8px;color:#8e939c;transform:rotate(90deg) scaleX(0.925);">Response Time (ms)</div>
<div class="t" style="left:582.20px;top:263.10px;width:400px;text-align:center;font-size:6.8px;line-height:6.8px;color:#8e939c;transform:rotate(90deg) scaleX(0.925);">Response Time (ms)</div>
<div class="t" style="left:576.00px;top:288.60px;width:400px;text-align:center;font-size:6.8px;line-height:6.8px;color:#8e939c;transform:rotate(90deg) scaleX(0.986);">Status</div>
<div class="a" style="left:3.00px;top:317.60px;width:264.00px;height:20.20px;background:#1a1a1a;"></div>
<div class="a" style="left:3.50px;top:337.80px;width:263.00px;height:97.20px;background:#222631;border-radius:3px 3px 0 0;"></div>
<svg class="a" style="left:9.90px;top:323.30px;" width="12" height="9" viewBox="0 0 12 9"><g fill="#fff"><rect x="0" y="0.3" width="1.2" height="8.4"/><rect x="0" y="7.6" width="11.8" height="1.1"/><rect x="2.8" y="4.6" width="1.3" height="3"/><rect x="4.8" y="1.6" width="1.3" height="6"/><rect x="6.9" y="3.6" width="1.3" height="4"/><rect x="8.9" y="1" width="1.3" height="6.6"/></g></svg>
<div class="a" style="left:12.00px;top:375.20px;width:10.00px;height:0.90px;background:#4e5159;"></div>
<div class="a" style="left:13.00px;top:390.00px;width:5.00px;height:32.50px;background:#6591bd;"></div>
<div class="a" style="left:12.00px;top:422.00px;width:7.00px;height:5.50px;background:#34c934;"></div>
<div class="t o" style="left:11.80px;top:433.87px;font-size:6.6px;color:#e8e8e8;transform:scaleX(0.913);--w:6.70;font-weight:700;">17</div>
</div>
<div class="a" style="left:0;top:0;width:695.5px;height:609px;overflow:hidden">
<div class="a" style="left:18.20px;top:274.00px;width:677.30px;height:335.00px;background:#000;"></div>
<div class="a" style="left:18.20px;top:274.00px;width:677.30px;height:17.40px;background:#16181d;"></div>
<div class="a" style="left:23.40px;top:277.90px;width:10.10px;height:9.10px;background:#5c667a;border-radius:2px;"></div>
<svg class="a" style="left:23.40px;top:277.90px;" width="10" height="9" viewBox="0 0 10 9"><g fill="none" stroke="#fff" stroke-width="1.2"><path d="M2.4,4.2 A2.7,2.7 0 0 1 7.5,3.2"/><path d="M7.7,5 A2.7,2.7 0 0 1 2.6,6"/></g><path d="M8.2,1.5 L8.2,4.1 L5.8,3.9 Z" fill="#fff"/><path d="M1.8,7.6 L1.8,5 L4.2,5.2 Z" fill="#fff"/></svg>
<div class="t o" style="left:38.30px;top:280.67px;font-size:6.8px;color:#a6abb3;transform:scaleX(1.000);--w:5.10;">홈</div>
<div class="t o" style="left:46.50px;top:280.67px;font-size:6.8px;color:#5b606a;transform:scaleX(0.794);--w:1.50;">/</div>
<div class="t o" style="left:52.00px;top:280.67px;font-size:6.8px;color:#a6abb3;transform:scaleX(1.064);--w:21.70;">헬스체크</div>
<div class="t o" style="left:76.00px;top:280.67px;font-size:6.8px;color:#5b606a;transform:scaleX(0.794);--w:1.50;">/</div>
<div class="t o" style="left:81.60px;top:280.67px;font-size:6.8px;color:#a6abb3;transform:scaleX(0.927);--w:27.50;">SLA 보고서</div>
<div class="t o" style="left:112.20px;top:280.67px;font-size:6.8px;color:#5b606a;transform:scaleX(0.794);--w:1.50;">/</div>
<div class="t o" style="left:117.00px;top:280.67px;font-size:6.8px;color:#a6abb3;transform:scaleX(0.711);--w:14.50;">KERIS</div>
<div class="t o" style="left:133.90px;top:280.67px;font-size:6.8px;color:#5b606a;transform:scaleX(0.794);--w:1.50;">/</div>
<div class="t o" style="left:139.40px;top:280.67px;font-size:6.8px;color:#eceef2;transform:scaleX(0.878);--w:16.60;">Group</div>
<div class="a" style="left:679.80px;top:276.00px;width:13.20px;height:13.00px;background:#f5dc8a;border-radius:2px;"></div>
<svg class="a" style="left:682.40px;top:278.50px;" width="8" height="8" viewBox="0 0 8 8"><rect x="3.25" y="0" width="1.5" height="2.40" fill="#5a5a5a" transform="rotate(0 4.0 4.0)"/><rect x="3.25" y="0" width="1.5" height="2.40" fill="#5a5a5a" transform="rotate(45 4.0 4.0)"/><rect x="3.25" y="0" width="1.5" height="2.40" fill="#5a5a5a" transform="rotate(90 4.0 4.0)"/><rect x="3.25" y="0" width="1.5" height="2.40" fill="#5a5a5a" transform="rotate(135 4.0 4.0)"/><rect x="3.25" y="0" width="1.5" height="2.40" fill="#5a5a5a" transform="rotate(180 4.0 4.0)"/><rect x="3.25" y="0" width="1.5" height="2.40" fill="#5a5a5a" transform="rotate(225 4.0 4.0)"/><rect x="3.25" y="0" width="1.5" height="2.40" fill="#5a5a5a" transform="rotate(270 4.0 4.0)"/><rect x="3.25" y="0" width="1.5" height="2.40" fill="#5a5a5a" transform="rotate(315 4.0 4.0)"/><circle cx="4.0" cy="4.0" r="2.40" fill="#5a5a5a"/><circle cx="4.0" cy="4.0" r="1.04" fill="#f5dc8a"/></svg>
<div class="a" style="left:19.70px;top:292.50px;width:675.80px;height:17.70px;background:#363c4d;border-radius:3px 0 0 3px;"></div>
<div class="a" style="left:23.10px;top:296.40px;width:40.50px;height:10.80px;background:#2b303c;border:1px solid #4b5162;border-radius:2px;"></div>
<svg class="a" style="left:25.00px;top:297.80px;" width="7" height="8" viewBox="0 0 7 8"><g fill="none" stroke="#c9cdd6" stroke-width="0.9"><rect x="0.5" y="1.5" width="6" height="6"/></g><rect x="0.5" y="1.5" width="6" height="1.8" fill="#c9cdd6"/></svg>
<div class="t o" style="left:33.60px;top:299.47px;font-size:6.4px;color:#e4e7ee;transform:scaleX(0.747);--w:27.90;font-weight:700;">Daily/Hourly</div>
<svg class="a" style="left:67.20px;top:298.20px;" width="7" height="7" viewBox="0 0 7 7"><path d="M1.6,3.5 A2.4,2.4 0 1 0 2.6,1.4" fill="none" stroke="#c9cdd6" stroke-width="1.1"/><path d="M0.3,0.5 L3.3,0.5 L3.1,3.1 Z" fill="#c9cdd6"/></svg>
<div class="t o" style="left:74.50px;top:299.47px;font-size:6.4px;color:#b9bec8;transform:scaleX(0.801);--w:15.10;">Range</div>
<div class="a" style="left:94.40px;top:297.00px;width:0.80px;height:9.50px;background:#4f5566;"></div>
<svg class="a" style="left:100.40px;top:298.50px;" width="6" height="6" viewBox="0 0 6 6"><circle cx="3" cy="3" r="3" fill="#e9ebf0"/><path d="M3.7,1.6 L2.2,3 L3.7,4.4" fill="none" stroke="#363c4c" stroke-width="1"/></svg>
<svg class="a" style="left:111.30px;top:297.50px;" width="7" height="8" viewBox="0 0 7 8"><g fill="none" stroke="#e6e8ee" stroke-width="0.9"><rect x="0.5" y="1.6" width="6" height="6" rx="0.6"/><path d="M2,0 V2.4 M5,0 V2.4 M0.5,3.4 H6.5"/></g></svg>
<svg class="a" style="left:122.10px;top:298.30px;" width="5" height="6" viewBox="0 0 5 6"><rect x="0" y="0.8" width="4.6" height="5" fill="#b9bec8"/></svg>
<div class="t o" style="left:128.00px;top:299.47px;font-size:6.4px;color:#b9bec8;transform:scaleX(0.837);--w:12.80;">Date:</div>
<div class="a" style="left:142.30px;top:295.60px;width:41.50px;height:10.20px;background:#3f4145;border:1px solid #5a5c62;border-radius:2px;"></div>
<div class="t o" style="left:145.50px;top:298.97px;font-size:6.4px;color:#eceef0;transform:scaleX(0.908);--w:26.50;">2021-9-17</div>
<svg class="a" style="left:187.80px;top:298.50px;" width="6" height="6" viewBox="0 0 6 6"><circle cx="3" cy="3" r="3" fill="#e9ebf0"/><path d="M2.3,1.6 L3.8,3 L2.3,4.4" fill="none" stroke="#363c4c" stroke-width="1"/></svg>
<div class="a" style="left:198.20px;top:297.00px;width:0.80px;height:9.50px;background:#4f5566;"></div>
<svg class="a" style="left:203.00px;top:298.60px;" width="5" height="5" viewBox="0 0 5 5"><circle cx="2.5" cy="2.5" r="2" fill="none" stroke="#b9bec8" stroke-width="0.9"/></svg>
<div class="t o" style="left:209.00px;top:299.47px;font-size:6.4px;color:#b9bec8;transform:scaleX(0.856);--w:13.50;">Time:</div>
<div class="a" style="left:224.20px;top:295.60px;width:41.30px;height:10.20px;background:#3f4145;border:1px solid #5a5c62;border-radius:2px;"></div>
<div class="t o" style="left:227.00px;top:298.97px;font-size:6.2px;color:#7d8087;transform:scaleX(0.870);--w:9.00;">h24</div>
<div class="a" style="left:269.00px;top:297.00px;width:0.80px;height:9.50px;background:#4f5566;"></div>
<svg class="a" style="left:274.50px;top:298.00px;" width="7" height="7" viewBox="0 0 7 7"><circle cx="2.8" cy="2.8" r="2.1" fill="none" stroke="#fff" stroke-width="1.2"/><path d="M4.3,4.3 L6.5,6.5" stroke="#fff" stroke-width="1.4"/></svg>
<div class="t o" style="left:282.40px;top:300.31px;font-size:5.8px;color:#e8eaee;transform:scaleX(1.103);--w:9.60;">검색</div>
<div class="a" style="left:297.00px;top:297.00px;width:0.80px;height:9.50px;background:#4f5566;"></div>
<svg class="a" style="left:302.60px;top:297.60px;" width="6" height="8" viewBox="0 0 6 8"><path d="M0,0 H4 L6,2 V8 H0 Z" fill="#e8eaee"/></svg>
<div class="t o" style="left:310.60px;top:300.31px;font-size:5.8px;color:#e8eaee;transform:scaleX(1.050);--w:13.70;">보고서</div>
<svg class="a" style="left:22.70px;top:318.80px;" width="6" height="5" viewBox="0 0 6 5"><g fill="#8c9099"><rect x="0" y="0" width="0.8" height="5"/><rect x="0" y="4.2" width="6" height="0.8"/><rect x="1.6" y="2" width="0.9" height="2.2"/><rect x="3" y="1" width="0.9" height="3.2"/><rect x="4.4" y="1.8" width="0.9" height="2.4"/></g></svg>
<div class="t o" style="left:30.60px;top:320.17px;font-size:6.6px;color:#b4b8c0;transform:scaleX(0.772);--w:15.30;">KERIS</div>
<div class="a" style="left:19.20px;top:327.90px;width:111.00px;height:38.10px;background:#cfe1c4;"></div>
<div class="a" style="left:19.20px;top:327.90px;width:1.60px;height:38.10px;background:#8fd08a;"></div>
<div class="t o" style="left:68.15px;top:334.47px;font-size:7.9px;color:#3f6a3c;transform:scaleX(0.867);--w:13.70;font-weight:700;-webkit-text-stroke:0.35px #3f6a3c;">SLA</div>
<div class="t o" style="left:59.80px;top:348.47px;font-size:7.5px;color:#456c40;transform:scaleX(0.959);--w:30.40;font-weight:700;-webkit-text-stroke:0.25px #456c40;">100.00 %</div>
<div class="a" style="left:131.50px;top:327.90px;width:111.00px;height:38.10px;background:#cfe1c4;"></div>
<div class="a" style="left:131.50px;top:327.90px;width:1.60px;height:38.10px;background:#8fd08a;"></div>
<div class="t o" style="left:170.60px;top:334.47px;font-size:7.9px;color:#3f6a3c;transform:scaleX(1.290);--w:33.40;font-weight:700;-webkit-text-stroke:0.35px #3f6a3c;">중단 횟수</div>
<div class="t o" style="left:185.50px;top:348.47px;font-size:7.5px;color:#456c40;transform:scaleX(0.863);--w:3.60;font-weight:700;-webkit-text-stroke:0.25px #456c40;">0</div>
<div class="a" style="left:243.80px;top:327.90px;width:111.00px;height:38.10px;background:#cfe1c4;"></div>
<div class="a" style="left:243.80px;top:327.90px;width:1.60px;height:38.10px;background:#8fd08a;"></div>
<div class="t o" style="left:283.50px;top:334.47px;font-size:7.9px;color:#3f6a3c;transform:scaleX(1.243);--w:32.20;font-weight:700;-webkit-text-stroke:0.35px #3f6a3c;">중단 시간</div>
<div class="t o" style="left:294.10px;top:348.47px;font-size:7.5px;color:#456c40;transform:scaleX(1.123);--w:11.00;font-weight:700;-webkit-text-stroke:0.25px #456c40;">0초</div>
<div class="a" style="left:356.10px;top:327.90px;width:111.00px;height:38.10px;background:#cfe1c4;"></div>
<div class="a" style="left:356.10px;top:327.90px;width:1.60px;height:38.10px;background:#8fd08a;"></div>
<div class="t o" style="left:387.75px;top:334.47px;font-size:7.9px;color:#3f6a3c;transform:scaleX(1.280);--w:48.30;font-weight:700;-webkit-text-stroke:0.35px #3f6a3c;">일시중지 횟수</div>
<div class="t o" style="left:410.10px;top:348.47px;font-size:7.5px;color:#456c40;transform:scaleX(0.863);--w:3.60;font-weight:700;-webkit-text-stroke:0.25px #456c40;">0</div>
<div class="a" style="left:468.40px;top:327.90px;width:111.00px;height:38.10px;background:#cfe1c4;"></div>
<div class="a" style="left:468.40px;top:327.90px;width:1.60px;height:38.10px;background:#8fd08a;"></div>
<div class="t o" style="left:500.05px;top:334.47px;font-size:7.9px;color:#3f6a3c;transform:scaleX(1.280);--w:48.30;font-weight:700;-webkit-text-stroke:0.35px #3f6a3c;">일시중지 시간</div>
<div class="t o" style="left:518.70px;top:348.47px;font-size:7.5px;color:#456c40;transform:scaleX(1.123);--w:11.00;font-weight:700;-webkit-text-stroke:0.25px #456c40;">0초</div>
<div class="a" style="left:580.70px;top:327.90px;width:111.00px;height:38.10px;background:#cfe1c4;"></div>
<div class="a" style="left:580.70px;top:327.90px;width:1.60px;height:38.10px;background:#8fd08a;"></div>
<div class="t o" style="left:614.25px;top:334.47px;font-size:7.9px;color:#3f6a3c;transform:scaleX(0.966);--w:44.50;font-weight:700;-webkit-text-stroke:0.35px #3f6a3c;">MTTR/MTBF</div>
<div class="t o" style="left:611.00px;top:348.47px;font-size:7.5px;color:#456c40;transform:scaleX(1.176);--w:51.00;font-weight:700;-webkit-text-stroke:0.25px #456c40;">0초/14시간 9분</div>
<div class="t o" style="left:122.60px;top:332.87px;font-size:5px;color:#e0a0a0;transform:scaleX(0.935);--w:2.60;">?</div>
<svg class="a" style="left:22.70px;top:369.00px;" width="7" height="6" viewBox="0 0 7 6"><g fill="#8c9099"><rect x="0" y="0" width="0.8" height="6"/><rect x="0" y="5.2" width="7" height="0.8"/><rect x="1.6" y="2.6" width="0.9" height="2.6"/><rect x="3" y="1" width="0.9" height="4.2"/><rect x="4.4" y="2.2" width="0.9" height="3"/><rect x="5.8" y="0.8" width="0.9" height="4.4"/></g></svg>
<div class="t o" style="left:31.00px;top:368.97px;font-size:7.2px;color:#b4b8c0;transform:scaleX(0.853);--w:28.00;">SLA Chart</div>
<div class="a" style="left:20.40px;top:379.30px;width:673.60px;height:130.90px;background:#222631;border-radius:3px;"></div>
<svg class="a" style="left:0;top:0" width="969" height="609"><rect x="24.9" y="382.3" width="638.1" height="1" fill="#4a4d56"/><rect x="24.9" y="409.4" width="638.1" height="1" fill="#4a4d56"/><rect x="24.9" y="436.3" width="638.1" height="1" fill="#4a4d56"/><path d="M31.00,436.30 C38.63,436.30 61.97,439.12 76.80,436.30 C91.63,433.48 105.77,420.03 120.00,419.40 C134.23,418.77 147.53,432.08 162.20,432.50 C176.87,432.92 196.23,426.15 208.00,421.90 C219.77,417.65 225.40,410.72 232.80,407.00 C240.20,403.28 245.87,399.18 252.40,399.60 C258.93,400.02 264.98,404.13 272.00,409.50 C279.02,414.87 282.88,428.72 294.50,431.80 C306.12,434.88 326.45,427.63 341.70,428.00 C356.95,428.37 371.28,433.58 386.00,434.00 C400.72,434.42 414.33,430.25 430.00,430.50 C445.67,430.75 465.12,434.38 480.00,435.50 C494.88,436.62 505.38,437.62 519.30,437.20 C533.22,436.78 553.15,432.25 563.50,433.00 C573.85,433.75 575.15,438.27 581.40,441.70 C587.65,445.13 589.12,451.62 601.00,453.60 C612.88,455.58 644.08,453.60 652.70,453.60 L652.70,463.50 L31.00,463.50 Z" fill="#6591bd"/><path d="M31.00,436.30 C38.63,436.30 61.97,439.12 76.80,436.30 C91.63,433.48 105.77,420.03 120.00,419.40 C134.23,418.77 147.53,432.08 162.20,432.50 C176.87,432.92 196.23,426.15 208.00,421.90 C219.77,417.65 225.40,410.72 232.80,407.00 C240.20,403.28 245.87,399.18 252.40,399.60 C258.93,400.02 264.98,404.13 272.00,409.50 C279.02,414.87 282.88,428.72 294.50,431.80 C306.12,434.88 326.45,427.63 341.70,428.00 C356.95,428.37 371.28,433.58 386.00,434.00 C400.72,434.42 414.33,430.25 430.00,430.50 C445.67,430.75 465.12,434.38 480.00,435.50 C494.88,436.62 505.38,437.62 519.30,437.20 C533.22,436.78 553.15,432.25 563.50,433.00 C573.85,433.75 575.15,438.27 581.40,441.70 C587.65,445.13 589.12,451.62 601.00,453.60 C612.88,455.58 644.08,453.60 652.70,453.60" fill="none" stroke="#7cb5ec" stroke-width="1.1"/><rect x="24.9" y="382.3" width="638.1" height="1" fill="#ffffff" opacity="0.1"/><rect x="24.9" y="409.4" width="638.1" height="1" fill="#ffffff" opacity="0.1"/><rect x="24.9" y="436.3" width="638.1" height="1" fill="#ffffff" opacity="0.1"/><rect x="24.9" y="463.5" width="633.7" height="9.2" fill="#34c934"/><rect x="658.6" y="463" width="4.5" height="0.9" fill="#4a4d56"/><rect x="658.6" y="472.2" width="4.5" height="0.9" fill="#4a4d56"/></svg>
<div class="a" style="left:30.60px;top:472.70px;width:0.80px;height:3.20px;background:#6b6f78;"></div>
<div class="t o" style="left:22.90px;top:477.27px;font-size:6.2px;color:#e4e4e4;transform:scaleX(0.788);--w:17.10;font-weight:700;">17. Sep</div>
<div class="a" style="left:75.05px;top:472.70px;width:0.80px;height:3.20px;background:#6b6f78;"></div>
<div class="t o" style="left:68.15px;top:477.27px;font-size:6.2px;color:#e4e4e4;transform:scaleX(0.921);--w:14.60;font-weight:700;">01:00</div>
<div class="a" style="left:119.50px;top:472.70px;width:0.80px;height:3.20px;background:#6b6f78;"></div>
<div class="t o" style="left:112.60px;top:477.27px;font-size:6.2px;color:#e4e4e4;transform:scaleX(0.921);--w:14.60;font-weight:700;">02:00</div>
<div class="a" style="left:163.95px;top:472.70px;width:0.80px;height:3.20px;background:#6b6f78;"></div>
<div class="t o" style="left:157.05px;top:477.27px;font-size:6.2px;color:#e4e4e4;transform:scaleX(0.921);--w:14.60;font-weight:700;">03:00</div>
<div class="a" style="left:208.40px;top:472.70px;width:0.80px;height:3.20px;background:#6b6f78;"></div>
<div class="t o" style="left:201.50px;top:477.27px;font-size:6.2px;color:#e4e4e4;transform:scaleX(0.921);--w:14.60;font-weight:700;">04:00</div>
<div class="a" style="left:252.85px;top:472.70px;width:0.80px;height:3.20px;background:#6b6f78;"></div>
<div class="t o" style="left:245.95px;top:477.27px;font-size:6.2px;color:#e4e4e4;transform:scaleX(0.921);--w:14.60;font-weight:700;">05:00</div>
<div class="a" style="left:297.30px;top:472.70px;width:0.80px;height:3.20px;background:#6b6f78;"></div>
<div class="t o" style="left:290.40px;top:477.27px;font-size:6.2px;color:#e4e4e4;transform:scaleX(0.921);--w:14.60;font-weight:700;">06:00</div>
<div class="a" style="left:341.75px;top:472.70px;width:0.80px;height:3.20px;background:#6b6f78;"></div>
<div class="t o" style="left:334.85px;top:477.27px;font-size:6.2px;color:#e4e4e4;transform:scaleX(0.921);--w:14.60;font-weight:700;">07:00</div>
<div class="a" style="left:386.20px;top:472.70px;width:0.80px;height:3.20px;background:#6b6f78;"></div>
<div class="t o" style="left:379.30px;top:477.27px;font-size:6.2px;color:#e4e4e4;transform:scaleX(0.921);--w:14.60;font-weight:700;">08:00</div>
<div class="a" style="left:430.65px;top:472.70px;width:0.80px;height:3.20px;background:#6b6f78;"></div>
<div class="t o" style="left:423.75px;top:477.27px;font-size:6.2px;color:#e4e4e4;transform:scaleX(0.921);--w:14.60;font-weight:700;">09:00</div>
<div class="a" style="left:475.10px;top:472.70px;width:0.80px;height:3.20px;background:#6b6f78;"></div>
<div class="t o" style="left:468.20px;top:477.27px;font-size:6.2px;color:#e4e4e4;transform:scaleX(0.921);--w:14.60;font-weight:700;">10:00</div>
<div class="a" style="left:519.55px;top:472.70px;width:0.80px;height:3.20px;background:#6b6f78;"></div>
<div class="t o" style="left:512.65px;top:477.27px;font-size:6.2px;color:#e4e4e4;transform:scaleX(0.941);--w:14.60;font-weight:700;">11:00</div>
<div class="a" style="left:564.00px;top:472.70px;width:0.80px;height:3.20px;background:#6b6f78;"></div>
<div class="t o" style="left:557.10px;top:477.27px;font-size:6.2px;color:#e4e4e4;transform:scaleX(0.921);--w:14.60;font-weight:700;">12:00</div>
<div class="a" style="left:608.45px;top:472.70px;width:0.80px;height:3.20px;background:#6b6f78;"></div>
<div class="t o" style="left:601.55px;top:477.27px;font-size:6.2px;color:#e4e4e4;transform:scaleX(0.921);--w:14.60;font-weight:700;">13:00</div>
<div class="a" style="left:652.90px;top:472.70px;width:0.80px;height:3.20px;background:#6b6f78;"></div>
<div class="t o" style="left:646.00px;top:477.27px;font-size:6.2px;color:#e4e4e4;transform:scaleX(0.921);--w:14.60;font-weight:700;">14:00</div>
<div class="t o" style="left:665.50px;top:381.37px;font-size:6.2px;color:#d8d8d8;transform:scaleX(1.015);--w:7.00;font-weight:700;">30</div>
<div class="t o" style="left:665.50px;top:408.47px;font-size:6.2px;color:#d8d8d8;transform:scaleX(1.015);--w:7.00;font-weight:700;">20</div>
<div class="t o" style="left:665.50px;top:435.37px;font-size:6.2px;color:#d8d8d8;transform:scaleX(1.015);--w:7.00;font-weight:700;">10</div>
<div class="t o" style="left:665.50px;top:462.07px;font-size:6.2px;color:#d8d8d8;transform:scaleX(1.015);--w:3.50;font-weight:700;">0</div>
<div class="t o" style="left:665.50px;top:470.97px;font-size:6.2px;color:#d8d8d8;transform:scaleX(1.015);--w:3.50;font-weight:700;">0</div>
<div class="a" style="left:248.00px;top:491.60px;width:6.80px;height:5.00px;background:#7cb5ec;"></div>
<div class="t o" style="left:256.50px;top:492.37px;font-size:6.2px;color:#e0e0e0;transform:scaleX(0.864);--w:39.50;font-weight:700;">Response Time</div>
<div class="a" style="left:304.90px;top:491.60px;width:6.80px;height:5.00px;background:#34c934;"></div>
<div class="t o" style="left:313.60px;top:492.37px;font-size:6.2px;color:#e0e0e0;transform:scaleX(0.781);--w:30.40;font-weight:700;">SUCCEEDED</div>
<div class="a" style="left:352.60px;top:491.60px;width:6.80px;height:5.00px;background:#dd0000;"></div>
<div class="t o" style="left:361.00px;top:492.37px;font-size:6.2px;color:#e0e0e0;transform:scaleX(0.862);--w:19.00;font-weight:700;">FAILED</div>
<div class="a" style="left:388.50px;top:491.60px;width:6.80px;height:5.00px;background:#f5a21c;"></div>
<div class="t o" style="left:397.00px;top:492.37px;font-size:6.2px;color:#e0e0e0;transform:scaleX(0.827);--w:21.00;font-weight:700;">PAUSED</div>
<div class="a" style="left:426.00px;top:491.60px;width:6.80px;height:5.00px;background:#e6cf4a;"></div>
<div class="t o" style="left:435.00px;top:492.37px;font-size:6.2px;color:#e0e0e0;transform:scaleX(0.847);--w:28.00;font-weight:700;">UNKNOWN</div>
<svg class="a" style="left:23.60px;top:512.80px;" width="6" height="6" viewBox="0 0 6 6"><g fill="#8c9099"><rect x="0" y="0" width="6" height="6"/></g><g fill="#000"><rect x="1.8" y="0.8" width="0.6" height="5"/><rect x="3.6" y="0.8" width="0.6" height="5"/></g></svg>
<div class="t o" style="left:31.00px;top:513.37px;font-size:7.2px;color:#b4b8c0;transform:scaleX(0.811);--w:38.00;">SLA Event List</div>
<div class="a" style="left:19.40px;top:522.80px;width:674.60px;height:86.20px;background:#2a2a2a;border-radius:3px 3px 0 0;"></div>
<svg class="a" style="left:23.60px;top:529.00px;" width="7" height="6" viewBox="0 0 7 6"><g fill="#c0c4cc"><rect x="0" y="0" width="1.5" height="6"/><rect x="2.6" y="0" width="1.5" height="6"/><rect x="5.2" y="0" width="1.5" height="6"/></g></svg>
<div class="a" style="left:35.30px;top:528.00px;width:0.70px;height:8.00px;background:#555;"></div>
<div class="a" style="left:38.00px;top:527.20px;width:68.50px;height:9.80px;background:#2a2a2a;border:1px solid #5a5a5a;border-radius:5px;"></div>
<svg class="a" style="left:41.50px;top:529.80px;" width="5" height="5" viewBox="0 0 5 5"><circle cx="2" cy="2" r="1.5" fill="none" stroke="#666" stroke-width="0.8"/><path d="M3,3 L4.6,4.6" stroke="#666" stroke-width="0.8"/></svg>
<div class="t o" style="left:48.50px;top:531.51px;font-size:5.8px;color:#6a6a6a;transform:scaleX(1.026);--w:19.50;">모든 필드</div>
<svg class="a" style="left:109.50px;top:528.60px;" width="7" height="7" viewBox="0 0 7 7"><circle cx="2.8" cy="2.8" r="2.1" fill="none" stroke="#fff" stroke-width="1.2"/><path d="M4.3,4.3 L6.5,6.5" stroke="#fff" stroke-width="1.4"/></svg>
<div class="t o" style="left:117.50px;top:531.71px;font-size:5.8px;color:#e8eaee;transform:scaleX(1.092);--w:9.50;">검색</div>
<svg class="a" style="left:129.00px;top:531.00px;" width="4" height="3" viewBox="0 0 4 3"><path d="M0,0 H4 L2,2.4Z" fill="#ddd"/></svg>
<div class="a" style="left:19.40px;top:539.60px;width:674.60px;height:10.60px;background:linear-gradient(#3a3a3a,#303030);"></div>
<div class="a" style="left:34.30px;top:539.60px;width:0.70px;height:70.00px;background:#2a2a2a;"></div>
<div class="a" style="left:94.20px;top:539.60px;width:0.70px;height:70.00px;background:#2a2a2a;"></div>
<div class="a" style="left:158.50px;top:539.60px;width:0.70px;height:70.00px;background:#2a2a2a;"></div>
<div class="a" style="left:223.40px;top:539.60px;width:0.70px;height:70.00px;background:#2a2a2a;"></div>
<div class="a" style="left:270.20px;top:539.60px;width:0.70px;height:70.00px;background:#2a2a2a;"></div>
<div class="t o" style="left:27.00px;top:543.81px;font-size:5.6px;color:#cfcfcf;transform:scaleX(0.963);--w:3.00;">#</div>
<div class="t o" style="left:36.00px;top:543.81px;font-size:5.6px;color:#d8d8d8;transform:scaleX(0.869);--w:11.00;font-weight:700;">Type</div>
<div class="t o" style="left:95.40px;top:543.81px;font-size:5.6px;color:#d8d8d8;transform:scaleX(1.122);--w:20.60;">시작 시간</div>
<div class="t o" style="left:159.70px;top:543.81px;font-size:5.6px;color:#d8d8d8;transform:scaleX(1.106);--w:20.30;">종료 시간</div>
<div class="t o" style="left:224.00px;top:543.81px;font-size:5.6px;color:#d8d8d8;transform:scaleX(1.117);--w:20.50;">경과 시간</div>
<div class="t o" style="left:271.50px;top:543.81px;font-size:5.6px;color:#d8d8d8;transform:scaleX(0.896);--w:14.50;font-weight:700;">Memo</div>
<div class="a" style="left:19.40px;top:550.20px;width:674.60px;height:10.40px;background:#1c1c1c;"></div>
<div class="a" style="left:19.40px;top:560.60px;width:674.60px;height:10.50px;background:#2b2b2b;"></div>
<div class="a" style="left:19.40px;top:571.10px;width:674.60px;height:10.20px;background:#1c1c1c;"></div>
<div class="a" style="left:19.40px;top:581.30px;width:674.60px;height:10.30px;background:#2b2b2b;"></div>
<div class="a" style="left:19.40px;top:591.60px;width:674.60px;height:10.00px;background:#1c1c1c;"></div>
<div class="a" style="left:19.40px;top:601.60px;width:674.60px;height:10.40px;background:#2b2b2b;"></div>
<div class="a" style="left:34.30px;top:550.20px;width:0.60px;height:60.00px;background:rgba(60,60,60,0.6);"></div>
<div class="a" style="left:94.20px;top:550.20px;width:0.60px;height:60.00px;background:rgba(60,60,60,0.6);"></div>
<div class="a" style="left:158.50px;top:550.20px;width:0.60px;height:60.00px;background:rgba(60,60,60,0.6);"></div>
<div class="a" style="left:223.40px;top:550.20px;width:0.60px;height:60.00px;background:rgba(60,60,60,0.6);"></div>
<div class="a" style="left:270.20px;top:550.20px;width:0.60px;height:60.00px;background:rgba(60,60,60,0.6);"></div>
<div class="a" style="left:691.60px;top:522.80px;width:4.00px;height:86.20px;background:#050505;"></div>
<div class="a" style="left:693.30px;top:560.00px;width:0.80px;height:49.00px;background:#3a3a3a;"></div>
</div>
<div class="a" style="left:0;top:0;width:957.8px;height:596.9px;overflow:hidden">
<div class="a" style="left:671px;top:289.9px;width:286.80px;height:307.00px;background:#fff;overflow:hidden;box-shadow:0 0 1px rgba(0,0,0,0.25)"></div>
<div class="a" style="left:671.00px;top:289.90px;width:286.80px;height:11.40px;background:#217346;"></div>
<div class="t o" style="left:679.90px;top:292.57px;font-size:6.6px;color:#ffffff;transform:scaleX(1.049);--w:22.70;">자동 저장</div>
<div class="a" style="left:706.00px;top:290.60px;width:16.70px;height:6.50px;background:transparent;border:0.9px solid #fff;border-radius:4px;"></div>
<div class="a" style="left:708.00px;top:292.10px;width:3.50px;height:3.50px;background:#fff;border-radius:50%;"></div>
<div class="t o" style="left:715.20px;top:293.37px;font-size:4.2px;color:#fff;transform:scaleX(1.206);--w:3.80;">끔</div>
<svg class="a" style="left:728.40px;top:290.80px;" width="8" height="8" viewBox="0 0 8 8"><g fill="none" stroke="#fff" stroke-width="0.8"><path d="M0.5,0.5 H6.4 L7.5,1.6 V7.5 H0.5 Z"/><path d="M2,0.5 V2.8 H5.6 V0.5"/><path d="M1.8,7.5 V4.6 H6.2 V7.5"/></g></svg>
<svg class="a" style="left:741.50px;top:290.80px;" width="8" height="8" viewBox="0 0 8 8"><path d="M2,2.5 C5,1.5 7,3 7,5 C7,6.5 5.5,7.5 3.5,7.3" fill="none" stroke="#fff" stroke-width="0.9"/><path d="M0.6,1 L3.4,1.2 L2.2,3.8Z" fill="#fff"/></svg>
<svg class="a" style="left:750.00px;top:293.00px;" width="3" height="2" viewBox="0 0 3 2"><path d="M0,0 H3 L1.5,2Z" fill="#fff"/></svg>
<svg class="a" style="left:755.50px;top:290.80px;" width="8" height="8" viewBox="0 0 8 8"><path d="M6,2.5 C3,1.5 1,3 1,5 C1,6.5 2.5,7.5 4.5,7.3" fill="none" stroke="#5d9f78" stroke-width="0.9"/></svg>
<svg class="a" style="left:770.00px;top:290.50px;" width="6" height="8.5" viewBox="0 0 6 8.5"><g fill="none" stroke="#fff" stroke-width="0.9"><circle cx="3" cy="2.3" r="1.8"/><path d="M1,4.5 H5 V8 H1Z"/></g></svg>
<svg class="a" style="left:778.00px;top:293.00px;" width="3" height="2" viewBox="0 0 3 2"><path d="M0,0 H3 L1.5,2Z" fill="#fff"/></svg>
<svg class="a" style="left:789.50px;top:292.00px;" width="4" height="4" viewBox="0 0 4 4"><path d="M0,0.5 H4 M0.5,1.6 H3.5 L2,3.4Z" stroke="#fff" stroke-width="0.6" fill="#fff"/></svg>
<div class="t o" style="left:822.80px;top:292.57px;font-size:6.6px;color:#ffffff;transform:scaleX(0.835);--w:67.40;white-space:pre;">_20210917142304  -  Excel</div>
<div class="a" style="left:911.50px;top:289.90px;width:46.30px;height:9.60px;background:#9fd2b3;"></div>
<svg class="a" style="left:914.00px;top:290.80px;" width="8" height="8" viewBox="0 0 8 8"><circle cx="5" cy="3" r="2.3" fill="none" stroke="#1f5e3a" stroke-width="0.9"/><path d="M3.3,4.7 L0.8,7.2" stroke="#1f5e3a" stroke-width="1"/></svg>
<div class="t o" style="left:931.00px;top:292.97px;font-size:6.2px;color:#2a5c3e;transform:scaleX(1.237);--w:11.50;">검색</div>
<div class="a" style="left:671.00px;top:299.50px;width:286.80px;height:1.80px;background:#1d6b3f;"></div>
<div class="a" style="left:671.00px;top:301.30px;width:286.80px;height:56.40px;background:#f3f2f1;"></div>
<div class="t o" style="left:676.80px;top:306.97px;font-size:6.8px;color:#444;transform:scaleX(1.098);--w:11.20;">파일</div>
<div class="t o" style="left:701.00px;top:306.97px;font-size:6.8px;color:#262626;transform:scaleX(1.118);--w:5.70;">홈</div>
<div class="t o" style="left:718.60px;top:306.97px;font-size:6.8px;color:#444;transform:scaleX(1.108);--w:11.30;">삽입</div>
<div class="t o" style="left:741.80px;top:306.97px;font-size:6.8px;color:#444;transform:scaleX(1.123);--w:42.20;">페이지 레이아웃</div>
<div class="t o" style="left:796.00px;top:306.97px;font-size:6.8px;color:#444;transform:scaleX(1.176);--w:12.00;">수식</div>
<div class="t o" style="left:819.90px;top:306.97px;font-size:6.8px;color:#444;transform:scaleX(1.118);--w:17.10;">데이터</div>
<div class="t o" style="left:849.00px;top:306.97px;font-size:6.8px;color:#444;transform:scaleX(1.078);--w:11.00;">검토</div>
<div class="t o" style="left:873.00px;top:306.97px;font-size:6.8px;color:#444;transform:scaleX(1.078);--w:11.00;">보기</div>
<div class="t o" style="left:896.00px;top:306.97px;font-size:6.8px;color:#444;transform:scaleX(1.111);--w:17.00;">도움말</div>
<div class="a" style="left:700.80px;top:312.60px;width:6.40px;height:1.40px;background:#217346;"></div>
<svg class="a" style="left:680.00px;top:318.30px;" width="14" height="14" viewBox="0 0 14 14"><path d="M1,2 H9.5 V12.5 H1Z" fill="#fff" stroke="#f0a030" stroke-width="1.3"/><path d="M3.3,0.8 H7.2 V3 H3.3Z" fill="#fff" stroke="#888" stroke-width="0.8"/><path d="M6,5.3 H13 V13.4 H6Z" fill="#fff" stroke="#777" stroke-width="0.9"/></svg>
<div class="t o" style="left:674.90px;top:335.47px;font-size:6.4px;color:#444;transform:scaleX(1.115);--w:21.40;">붙여넣기</div>
<svg class="a" style="left:685.00px;top:342.50px;" width="3" height="2" viewBox="0 0 3 2"><path d="M0,0 H3 L1.5,2Z" fill="#666"/></svg>
<svg class="a" style="left:700.00px;top:318.60px;" width="6" height="7" viewBox="0 0 6 7"><path d="M1,0 L4.5,5 M5,0 L1.5,5" stroke="#555" stroke-width="0.7"/><circle cx="1.3" cy="5.6" r="1.1" fill="#3c8fd8"/><circle cx="4.7" cy="5.6" r="1.1" fill="#3c8fd8"/></svg>
<div class="t o" style="left:707.30px;top:320.67px;font-size:6.4px;color:#444;transform:scaleX(1.089);--w:20.90;">잘라내기</div>
<svg class="a" style="left:699.10px;top:328.40px;" width="8" height="8" viewBox="0 0 8 8"><g fill="#fff" stroke="#555" stroke-width="0.7"><path d="M0.5,0.5 H4.5 V6 H0.5Z"/><path d="M2.5,2.5 H6.5 L7.5,3.5 V7.5 H2.5Z"/></g></svg>
<div class="t o" style="left:707.30px;top:331.37px;font-size:6.4px;color:#444;transform:scaleX(1.094);--w:10.50;">복사</div>
<svg class="a" style="left:723.00px;top:332.00px;" width="3" height="2" viewBox="0 0 3 2"><path d="M0,0 H3 L1.5,2Z" fill="#666"/></svg>
<svg class="a" style="left:699.10px;top:339.00px;" width="8" height="7" viewBox="0 0 8 7"><path d="M0,4 L3,6.8 L6,3.6 L3,1Z" fill="#f0a030"/><path d="M4,2.4 L7,0" stroke="#555" stroke-width="1"/></svg>
<div class="t o" style="left:707.30px;top:342.07px;font-size:6.4px;color:#444;transform:scaleX(1.096);--w:23.00;">서식 복사</div>
<div class="t o" style="left:689.30px;top:352.67px;font-size:6.4px;color:#555;transform:scaleX(1.089);--w:20.90;">클립보드</div>
<svg class="a" style="left:731.10px;top:353.00px;" width="5" height="4" viewBox="0 0 5 4"><path d="M0.5,0.5 H2 M0.5,0.5 V2 M1,1 L4,3.5 M4,3.5 H2.5 M4,3.5 V2" stroke="#777" stroke-width="0.6" fill="none"/></svg>
<div class="a" style="left:736.40px;top:317.00px;width:0.80px;height:38.50px;background:#d6d6d6;"></div>
<div class="a" style="left:740.70px;top:320.50px;width:76.00px;height:9.50px;background:#fff;border:0.8px solid #c6c6c6;"></div>
<div class="t o" style="left:742.80px;top:324.17px;font-size:6.4px;color:#333;transform:scaleX(1.058);--w:22.20;">맑은 고딕</div>
<svg class="a" style="left:812.00px;top:324.50px;" width="3" height="2" viewBox="0 0 3 2"><path d="M0,0 H3 L1.5,2Z" fill="#555"/></svg>
<div class="a" style="left:818.30px;top:320.50px;width:17.00px;height:9.50px;background:#fff;border:0.8px solid #c6c6c6;"></div>
<div class="t o" style="left:820.00px;top:324.17px;font-size:6.2px;color:#333;transform:scaleX(0.943);--w:6.50;">18</div>
<svg class="a" style="left:831.00px;top:324.50px;" width="3" height="2" viewBox="0 0 3 2"><path d="M0,0 H3 L1.5,2Z" fill="#555"/></svg>
<div class="t o" style="left:838.00px;top:323.37px;font-size:6.6px;color:#444;transform:scaleX(1.313);--w:6.50;">가</div>
<svg class="a" style="left:844.80px;top:321.00px;" width="3" height="2" viewBox="0 0 3 2"><path d="M0,2 H3 L1.5,0Z" fill="#3a8ad6"/></svg>
<div class="t o" style="left:848.20px;top:323.37px;font-size:6.2px;color:#444;transform:scaleX(1.376);--w:6.40;">가</div>
<svg class="a" style="left:854.40px;top:321.40px;" width="3" height="2" viewBox="0 0 3 2"><path d="M0,0 H3 L1.5,2Z" fill="#3a8ad6"/></svg>
<div class="a" style="left:740.70px;top:334.20px;width:9.90px;height:10.20px;background:#c5c5c5;border-radius:1px;"></div>
<div class="t o" style="left:742.30px;top:338.17px;font-size:6.6px;color:#222;transform:scaleX(1.354);--w:6.70;font-weight:700;">가</div>
<div class="t o" style="left:754.00px;top:338.17px;font-size:6.2px;color:#555;transform:scaleX(1.183);--w:5.50;font-style:italic;">가</div>
<div class="t o" style="left:764.00px;top:338.17px;font-size:6.2px;color:#555;transform:scaleX(1.398);--w:6.50;">간</div>
<div class="a" style="left:764.00px;top:342.80px;width:6.50px;height:0.60px;background:#555;"></div>
<svg class="a" style="left:773.50px;top:339.00px;" width="3" height="2" viewBox="0 0 3 2"><path d="M0,0 H3 L1.5,2Z" fill="#666"/></svg>
<div class="a" style="left:780.50px;top:334.50px;width:0.70px;height:10.00px;background:#d0d0d0;"></div>
<svg class="a" style="left:783.50px;top:335.00px;" width="9" height="9" viewBox="0 0 9 9"><g fill="none" stroke="#888" stroke-width="0.6"><rect x="0.5" y="0.5" width="8" height="8"/><path d="M4.5,0.5 V8.5 M0.5,4.5 H8.5"/></g><rect x="0" y="8" width="9" height="1" fill="#555"/></svg>
<svg class="a" style="left:794.80px;top:339.00px;" width="3" height="2" viewBox="0 0 3 2"><path d="M0,0 H3 L1.5,2Z" fill="#666"/></svg>
<div class="a" style="left:800.50px;top:334.50px;width:0.70px;height:10.00px;background:#d0d0d0;"></div>
<svg class="a" style="left:804.00px;top:334.20px;" width="8" height="7" viewBox="0 0 8 7"><path d="M1,3.5 L3.8,0.8 L6.6,3.5 L3.8,6.2Z" fill="none" stroke="#555" stroke-width="0.8"/><circle cx="7" cy="5" r="0.9" fill="#555"/></svg>
<div class="a" style="left:804.30px;top:341.50px;width:6.80px;height:1.60px;background:#ffff00;"></div>
<svg class="a" style="left:814.60px;top:339.00px;" width="3" height="2" viewBox="0 0 3 2"><path d="M0,0 H3 L1.5,2Z" fill="#666"/></svg>
<div class="t o" style="left:821.50px;top:336.77px;font-size:6.4px;color:#333;transform:scaleX(1.354);--w:6.50;font-weight:700;">가</div>
<div class="a" style="left:821.20px;top:341.60px;width:7.20px;height:1.60px;background:#ff0000;"></div>
<svg class="a" style="left:831.80px;top:339.00px;" width="3" height="2" viewBox="0 0 3 2"><path d="M0,0 H3 L1.5,2Z" fill="#666"/></svg>
<div class="a" style="left:838.00px;top:334.50px;width:0.70px;height:10.00px;background:#d0d0d0;"></div>
<div class="t o" style="left:841.50px;top:336.82px;font-size:3.4px;color:#888;transform:scaleX(1.471);--w:7.50;">내천</div>
<div class="t o" style="left:845.00px;top:340.82px;font-size:3.4px;color:#3a8ad6;transform:scaleX(1.569);--w:4.00;">가</div>
<svg class="a" style="left:852.50px;top:339.00px;" width="3" height="2" viewBox="0 0 3 2"><path d="M0,0 H3 L1.5,2Z" fill="#666"/></svg>
<div class="t o" style="left:790.30px;top:352.67px;font-size:6.4px;color:#555;transform:scaleX(0.948);--w:9.10;">글꼴</div>
<svg class="a" style="left:856.20px;top:353.00px;" width="5" height="4" viewBox="0 0 5 4"><path d="M0.5,0.5 H2 M0.5,0.5 V2 M1,1 L4,3.5 M4,3.5 H2.5 M4,3.5 V2" stroke="#777" stroke-width="0.6" fill="none"/></svg>
<div class="a" style="left:860.20px;top:317.00px;width:0.80px;height:39.00px;background:#d6d6d6;"></div>
<svg class="a" style="left:865.80px;top:321.00px;" width="7" height="7" viewBox="0 0 7 7"><rect x="0.00" y="0.00" width="6.30" height="0.8" fill="#666"/><rect x="0.95" y="2.00" width="4.41" height="0.8" fill="#666"/><rect x="0.00" y="4.00" width="6.30" height="0.8" fill="#666"/></svg>
<div class="a" style="left:874.30px;top:320.00px;width:10.50px;height:10.60px;background:#c8c8c8;border-radius:1px;"></div>
<svg class="a" style="left:876.40px;top:322.50px;" width="7" height="7" viewBox="0 0 7 7"><rect x="0.00" y="0.00" width="6.30" height="0.8" fill="#555"/><rect x="0.95" y="2.00" width="4.41" height="0.8" fill="#555"/><rect x="0.00" y="4.00" width="6.30" height="0.8" fill="#555"/></svg>
<svg class="a" style="left:887.00px;top:324.60px;" width="7" height="7" viewBox="0 0 7 7"><rect x="0.00" y="0.00" width="6.30" height="0.8" fill="#666"/><rect x="0.95" y="2.00" width="4.41" height="0.8" fill="#666"/><rect x="0.00" y="4.00" width="6.30" height="0.8" fill="#666"/></svg>
<div class="a" style="left:897.20px;top:320.50px;width:0.70px;height:10.50px;background:#d0d0d0;"></div>
<svg class="a" style="left:900.50px;top:320.50px;" width="9" height="9" viewBox="0 0 9 9"><path d="M1,8 L7,2" stroke="#3a8ad6" stroke-width="0.9"/><path d="M7.8,1.2 L5.2,1.8 L7.2,3.8Z" fill="#3a8ad6"/><text x="0" y="4.5" font-size="3.5" font-family="Liberation Sans" fill="#777">ab</text></svg>
<svg class="a" style="left:910.20px;top:324.80px;" width="3" height="2" viewBox="0 0 3 2"><path d="M0,0 H3 L1.5,2Z" fill="#666"/></svg>
<div class="a" style="left:921.50px;top:318.00px;width:0.70px;height:34.00px;background:#d6d6d6;"></div>
<svg class="a" style="left:924.90px;top:320.50px;" width="7" height="9" viewBox="0 0 7 9"><text x="0" y="4" font-size="3.6" font-family="Liberation Sans" fill="#777">ab</text><path d="M1,6 H5.5 V8.5 M3.8,7.2 L5.5,8.8 L7,7.2" fill="none" stroke="#3a8ad6" stroke-width="0.7"/></svg>
<div class="t o" style="left:933.50px;top:323.87px;font-size:6.4px;color:#444;transform:scaleX(0.889);--w:24.50;">자동 줄 바꿈</div>
<svg class="a" style="left:865.80px;top:336.50px;" width="7" height="9" viewBox="0 0 7 9"><rect x="0.00" y="0.00" width="6.30" height="0.8" fill="#666"/><rect x="0.00" y="2.00" width="3.78" height="0.8" fill="#666"/><rect x="0.00" y="4.00" width="6.30" height="0.8" fill="#666"/><rect x="0.00" y="6.00" width="3.78" height="0.8" fill="#666"/></svg>
<div class="a" style="left:874.30px;top:334.00px;width:10.50px;height:10.90px;background:#c8c8c8;border-radius:1px;"></div>
<svg class="a" style="left:876.40px;top:336.50px;" width="7" height="9" viewBox="0 0 7 9"><rect x="0.00" y="0.00" width="6.30" height="0.8" fill="#555"/><rect x="1.26" y="2.00" width="3.78" height="0.8" fill="#555"/><rect x="0.00" y="4.00" width="6.30" height="0.8" fill="#555"/><rect x="1.26" y="6.00" width="3.78" height="0.8" fill="#555"/></svg>
<svg class="a" style="left:887.00px;top:336.50px;" width="7" height="9" viewBox="0 0 7 9"><rect x="0.00" y="0.00" width="6.30" height="0.8" fill="#666"/><rect x="2.52" y="2.00" width="3.78" height="0.8" fill="#666"/><rect x="0.00" y="4.00" width="6.30" height="0.8" fill="#666"/><rect x="2.52" y="6.00" width="3.78" height="0.8" fill="#666"/></svg>
<div class="a" style="left:897.20px;top:334.50px;width:0.70px;height:10.50px;background:#d0d0d0;"></div>
<svg class="a" style="left:900.50px;top:336.00px;" width="7" height="8" viewBox="0 0 7 8"><rect x="2.8" y="0" width="4.2" height="0.8" fill="#666"/><rect x="2.8" y="2" width="4.2" height="0.8" fill="#666"/><rect x="2.8" y="4" width="4.2" height="0.8" fill="#666"/><rect x="0" y="6" width="7" height="0.8" fill="#666"/><path d="M0,1 L2,2.4 L0,3.8Z" fill="#3a8ad6"/></svg>
<svg class="a" style="left:911.30px;top:336.00px;" width="7" height="8" viewBox="0 0 7 8"><rect x="2.8" y="0" width="4.2" height="0.8" fill="#666"/><rect x="2.8" y="2" width="4.2" height="0.8" fill="#666"/><rect x="2.8" y="4" width="4.2" height="0.8" fill="#666"/><rect x="0" y="6" width="7" height="0.8" fill="#666"/><path d="M2,1 L0,2.4 L2,3.8Z" fill="#3a8ad6"/></svg>
<div class="a" style="left:923.00px;top:334.00px;width:35.00px;height:10.90px;background:#c8c8c8;border-radius:1px;"></div>
<svg class="a" style="left:924.30px;top:335.50px;" width="8" height="8" viewBox="0 0 8 8"><rect x="0.4" y="0.4" width="7.2" height="7.2" fill="#e8f1fb" stroke="#3a8ad6" stroke-width="0.8"/><path d="M1.5,4 L3,2.8 V5.2Z M6.5,4 L5,2.8 V5.2Z" fill="#3a8ad6"/></svg>
<div class="t o" style="left:933.50px;top:338.27px;font-size:6.4px;color:#333;transform:scaleX(0.806);--w:28.50;">병합하고 가운데</div>
<div class="t o" style="left:920.50px;top:352.67px;font-size:6.4px;color:#555;transform:scaleX(1.073);--w:10.30;">맞춤</div>
<div class="a" style="left:671.00px;top:357.70px;width:286.80px;height:1.60px;background:#dadada;"></div>
<div class="a" style="left:671.00px;top:359.30px;width:286.80px;height:19.80px;background:#e6e6e6;"></div>
<div class="a" style="left:673.00px;top:364.00px;width:44.50px;height:11.00px;background:#fff;"></div>
<div class="t o" style="left:676.00px;top:366.97px;font-size:7px;color:#444;transform:scaleX(0.916);--w:8.20;">C2</div>
<svg class="a" style="left:712.50px;top:369.00px;" width="3" height="2" viewBox="0 0 3 2"><path d="M0,0 H3 L1.5,2Z" fill="#555"/></svg>
<svg class="a" style="left:723.40px;top:365.50px;" width="2" height="8" viewBox="0 0 2 8"><circle cx="1" cy="1" r="0.5" fill="#999"/><circle cx="1" cy="4" r="0.5" fill="#999"/><circle cx="1" cy="7" r="0.5" fill="#999"/></svg>
<div class="a" style="left:731.90px;top:364.00px;width:47.10px;height:11.00px;background:#fff;"></div>
<svg class="a" style="left:737.50px;top:367.00px;" width="5" height="5" viewBox="0 0 5 5"><path d="M0.5,0.5 L4.5,4.5 M4.5,0.5 L0.5,4.5" stroke="#aaa" stroke-width="0.7"/></svg>
<svg class="a" style="left:753.50px;top:366.80px;" width="6" height="5" viewBox="0 0 6 5"><path d="M0.5,2.5 L2.2,4.3 L5.5,0.6" fill="none" stroke="#aaa" stroke-width="0.7"/></svg>
<div class="t o" style="left:769.50px;top:368.37px;font-size:6.6px;color:#555;transform:scaleX(0.974);--w:5.00;"><i>f</i><span style="font-size:4.5px">x</span></div>
<div class="a" style="left:781.90px;top:364.00px;width:175.90px;height:11.00px;background:#fff;"></div>
<div class="t o" style="left:786.40px;top:366.57px;font-size:7.6px;color:#333;transform:scaleX(1.010);--w:33.50;">SLA 보고서</div>
<div class="a" style="left:671.00px;top:379.10px;width:286.80px;height:9.90px;background:#e6e6e6;"></div>
<div class="a" style="left:764.40px;top:379.10px;width:116.70px;height:9.90px;background:#d2d2d2;"></div>
<div class="a" style="left:764.40px;top:387.60px;width:116.70px;height:1.40px;background:#217346;"></div>
<svg class="a" style="left:677.80px;top:382.00px;" width="7" height="6" viewBox="0 0 7 6"><path d="M6.5,0.2 V5.8 H0.6Z" fill="#bdbdbd"/></svg>
<div class="t o" style="left:702.10px;top:382.17px;font-size:6.6px;color:#444;transform:scaleX(1.090);--w:4.80;">A</div>
<div class="a" style="left:723.30px;top:380.50px;width:0.70px;height:8.50px;background:#c8c8c8;"></div>
<div class="t o" style="left:741.60px;top:382.17px;font-size:6.6px;color:#444;transform:scaleX(1.090);--w:4.80;">B</div>
<div class="a" style="left:764.10px;top:380.50px;width:0.70px;height:8.50px;background:#c8c8c8;"></div>
<div class="t o" style="left:782.50px;top:382.17px;font-size:6.6px;color:#217346;transform:scaleX(1.007);--w:4.80;">C</div>
<div class="a" style="left:805.10px;top:380.50px;width:0.70px;height:8.50px;background:#c8c8c8;"></div>
<div class="t o" style="left:822.15px;top:382.17px;font-size:6.6px;color:#217346;transform:scaleX(1.007);--w:4.80;">D</div>
<div class="a" style="left:843.40px;top:380.50px;width:0.70px;height:8.50px;background:#c8c8c8;"></div>
<div class="t o" style="left:860.00px;top:382.17px;font-size:6.6px;color:#217346;transform:scaleX(1.090);--w:4.80;">E</div>
<div class="a" style="left:880.80px;top:380.50px;width:0.70px;height:8.50px;background:#c8c8c8;"></div>
<div class="t o" style="left:897.35px;top:382.17px;font-size:6.6px;color:#444;transform:scaleX(1.191);--w:4.80;">F</div>
<div class="a" style="left:918.10px;top:380.50px;width:0.70px;height:8.50px;background:#c8c8c8;"></div>
<div class="t o" style="left:935.15px;top:382.17px;font-size:6.6px;color:#444;transform:scaleX(0.935);--w:4.80;">G</div>
<div class="a" style="left:956.40px;top:380.50px;width:0.70px;height:8.50px;background:#c8c8c8;"></div>
<div class="a" style="left:685.10px;top:380.50px;width:0.70px;height:8.50px;background:#c8c8c8;"></div>
<div class="a" style="left:671.00px;top:389.00px;width:14.40px;height:207.90px;background:#e6e6e6;"></div>
<div class="a" style="left:671.00px;top:399.20px;width:14.40px;height:15.20px;background:#d2d2d2;"></div>
<div class="a" style="left:684.10px;top:399.20px;width:1.40px;height:15.20px;background:#217346;"></div>
<div class="t o" style="left:676.50px;top:392.87px;font-size:6.8px;color:#444;transform:scaleX(0.952);--w:3.60;">1</div>
<div class="a" style="left:671.00px;top:398.90px;width:14.40px;height:0.70px;background:#d4d4d4;"></div>
<div class="t o" style="left:676.50px;top:408.57px;font-size:6.8px;color:#217346;transform:scaleX(0.952);--w:3.60;">2</div>
<div class="a" style="left:671.00px;top:414.10px;width:14.40px;height:0.70px;background:#d4d4d4;"></div>
<div class="t o" style="left:676.50px;top:418.12px;font-size:6.8px;color:#444;transform:scaleX(0.952);--w:3.60;">3</div>
<div class="a" style="left:671.00px;top:424.00px;width:14.40px;height:0.70px;background:#d4d4d4;"></div>
<div class="t o" style="left:676.50px;top:428.02px;font-size:6.8px;color:#444;transform:scaleX(0.952);--w:3.60;">4</div>
<div class="a" style="left:671.00px;top:433.90px;width:14.40px;height:0.70px;background:#d4d4d4;"></div>
<div class="t o" style="left:676.50px;top:437.87px;font-size:6.8px;color:#444;transform:scaleX(0.952);--w:3.60;">5</div>
<div class="a" style="left:671.00px;top:443.70px;width:14.40px;height:0.70px;background:#d4d4d4;"></div>
<div class="t o" style="left:676.50px;top:447.67px;font-size:6.8px;color:#444;transform:scaleX(0.952);--w:3.60;">6</div>
<div class="a" style="left:671.00px;top:453.50px;width:14.40px;height:0.70px;background:#d4d4d4;"></div>
<div class="t o" style="left:676.50px;top:457.42px;font-size:6.8px;color:#444;transform:scaleX(0.952);--w:3.60;">7</div>
<div class="a" style="left:671.00px;top:463.20px;width:14.40px;height:0.70px;background:#d4d4d4;"></div>
<div class="t o" style="left:676.50px;top:467.17px;font-size:6.8px;color:#444;transform:scaleX(0.952);--w:3.60;">8</div>
<div class="a" style="left:671.00px;top:473.00px;width:14.40px;height:0.70px;background:#d4d4d4;"></div>
<div class="t o" style="left:676.50px;top:477.02px;font-size:6.8px;color:#444;transform:scaleX(0.952);--w:3.60;">9</div>
<div class="a" style="left:671.00px;top:482.90px;width:14.40px;height:0.70px;background:#d4d4d4;"></div>
<div class="t o" style="left:674.70px;top:486.97px;font-size:6.8px;color:#444;transform:scaleX(0.952);--w:7.20;">10</div>
<div class="a" style="left:671.00px;top:492.90px;width:14.40px;height:0.70px;background:#d4d4d4;"></div>
<div class="t o" style="left:674.70px;top:497.17px;font-size:6.8px;color:#444;transform:scaleX(1.020);--w:7.20;">11</div>
<div class="a" style="left:671.00px;top:503.30px;width:14.40px;height:0.70px;background:#d4d4d4;"></div>
<div class="t o" style="left:674.70px;top:507.27px;font-size:6.8px;color:#444;transform:scaleX(0.952);--w:7.20;">12</div>
<div class="a" style="left:671.00px;top:513.10px;width:14.40px;height:0.70px;background:#d4d4d4;"></div>
<div class="t o" style="left:674.70px;top:517.02px;font-size:6.8px;color:#444;transform:scaleX(0.952);--w:7.20;">13</div>
<div class="a" style="left:671.00px;top:522.80px;width:14.40px;height:0.70px;background:#d4d4d4;"></div>
<div class="t o" style="left:674.70px;top:526.77px;font-size:6.8px;color:#444;transform:scaleX(0.952);--w:7.20;">14</div>
<div class="a" style="left:671.00px;top:532.60px;width:14.40px;height:0.70px;background:#d4d4d4;"></div>
<div class="t o" style="left:674.70px;top:536.47px;font-size:6.8px;color:#444;transform:scaleX(0.952);--w:7.20;">15</div>
<div class="a" style="left:671.00px;top:542.20px;width:14.40px;height:0.70px;background:#d4d4d4;"></div>
<div class="t o" style="left:674.70px;top:546.17px;font-size:6.8px;color:#444;transform:scaleX(0.952);--w:7.20;">16</div>
<div class="a" style="left:671.00px;top:552.00px;width:14.40px;height:0.70px;background:#d4d4d4;"></div>
<div class="t o" style="left:674.70px;top:555.97px;font-size:6.8px;color:#444;transform:scaleX(0.952);--w:7.20;">17</div>
<div class="a" style="left:671.00px;top:561.80px;width:14.40px;height:0.70px;background:#d4d4d4;"></div>
<div class="t o" style="left:674.70px;top:565.62px;font-size:6.8px;color:#444;transform:scaleX(0.952);--w:7.20;">18</div>
<div class="a" style="left:671.00px;top:571.30px;width:14.40px;height:0.70px;background:#d4d4d4;"></div>
<div class="t o" style="left:674.70px;top:575.27px;font-size:6.8px;color:#444;transform:scaleX(0.952);--w:7.20;">19</div>
<div class="a" style="left:671.00px;top:581.10px;width:14.40px;height:0.70px;background:#d4d4d4;"></div>
<div class="t o" style="left:674.70px;top:584.97px;font-size:6.8px;color:#444;transform:scaleX(0.952);--w:7.20;">20</div>
<div class="a" style="left:671.00px;top:590.70px;width:14.40px;height:0.70px;background:#d4d4d4;"></div>
<div class="t o" style="left:674.70px;top:594.67px;font-size:6.8px;color:#444;transform:scaleX(0.952);--w:7.20;">21</div>
<div class="a" style="left:671.00px;top:600.50px;width:14.40px;height:0.70px;background:#d4d4d4;"></div>
<svg class="a" style="left:0;top:0" width="969" height="609"><rect x="723.30" y="389" width="0.7" height="207.90" fill="#dcdcdc"/><rect x="764.10" y="389" width="0.7" height="207.90" fill="#dcdcdc"/><rect x="805.10" y="389" width="0.7" height="207.90" fill="#dcdcdc"/><rect x="843.40" y="389" width="0.7" height="207.90" fill="#dcdcdc"/><rect x="880.80" y="389" width="0.7" height="207.90" fill="#dcdcdc"/><rect x="918.10" y="389" width="0.7" height="207.90" fill="#dcdcdc"/><rect x="956.40" y="389" width="0.7" height="207.90" fill="#dcdcdc"/><rect x="685.40" y="398.90" width="272.40" height="0.7" fill="#dcdcdc"/><rect x="685.40" y="414.10" width="272.40" height="0.7" fill="#dcdcdc"/><rect x="685.40" y="424.00" width="272.40" height="0.7" fill="#dcdcdc"/><rect x="685.40" y="433.90" width="272.40" height="0.7" fill="#dcdcdc"/><rect x="685.40" y="443.70" width="272.40" height="0.7" fill="#dcdcdc"/><rect x="685.40" y="453.50" width="272.40" height="0.7" fill="#dcdcdc"/><rect x="685.40" y="463.20" width="272.40" height="0.7" fill="#dcdcdc"/><rect x="685.40" y="473.00" width="272.40" height="0.7" fill="#dcdcdc"/><rect x="685.40" y="482.90" width="272.40" height="0.7" fill="#dcdcdc"/><rect x="685.40" y="492.90" width="272.40" height="0.7" fill="#dcdcdc"/><rect x="685.40" y="503.30" width="272.40" height="0.7" fill="#dcdcdc"/><rect x="685.40" y="513.10" width="272.40" height="0.7" fill="#dcdcdc"/><rect x="685.40" y="522.80" width="272.40" height="0.7" fill="#dcdcdc"/><rect x="685.40" y="532.60" width="272.40" height="0.7" fill="#dcdcdc"/><rect x="685.40" y="542.20" width="272.40" height="0.7" fill="#dcdcdc"/><rect x="685.40" y="552.00" width="272.40" height="0.7" fill="#dcdcdc"/><rect x="685.40" y="561.80" width="272.40" height="0.7" fill="#dcdcdc"/><rect x="685.40" y="571.30" width="272.40" height="0.7" fill="#dcdcdc"/><rect x="685.40" y="581.10" width="272.40" height="0.7" fill="#dcdcdc"/><rect x="685.40" y="590.70" width="272.40" height="0.7" fill="#dcdcdc"/><rect x="685.40" y="600.50" width="272.40" height="0.7" fill="#dcdcdc"/></svg>
<div class="a" style="left:684.90px;top:389.00px;width:0.90px;height:207.90px;background:#c6c6c6;"></div>
<svg class="a" style="left:685.60px;top:389.30px;" width="12" height="11" viewBox="0 0 12 11"><circle cx="5.4" cy="5.3" r="4.3" fill="#fff" stroke="#e3222a" stroke-width="1.5"/><path d="M1.8,6 C2.8,4.2 3.8,4.3 4.7,5.6 C5.6,6.9 6.6,6.9 9.1,4.4" fill="none" stroke="#e3222a" stroke-width="1.1"/></svg>
<div class="t o" style="left:699.30px;top:389.67px;font-size:7.0px;color:#666;transform:scaleX(0.996);--w:31.40;">openmaru</div>
<div class="t o" style="left:699.30px;top:396.37px;font-size:4.2px;color:#999;transform:scaleX(1.066);--w:9.70;">APM</div>
<div class="t o" style="left:885.00px;top:392.37px;font-size:6.4px;color:#333;transform:scaleX(0.931);--w:70.40;">생성일 2021-09-17 14:23:04</div>
<div class="a" style="left:764.40px;top:399.60px;width:116.70px;height:14.40px;background:#fff;"></div>
<div class="a" style="left:764.10px;top:399.00px;width:117.50px;height:15.60px;background:transparent;border:1.4px solid #217346;"></div>
<div class="a" style="left:879.90px;top:412.80px;width:2.60px;height:2.60px;background:#217346;"></div>
<div class="t o" style="left:795.40px;top:402.14px;font-size:12.4px;color:#111;transform:scaleX(0.970);--w:54.00;font-weight:700;">SLA 보고서</div>
<div class="t o" style="left:686.80px;top:418.77px;font-size:6.6px;color:#222;transform:scaleX(0.940);--w:23.20;font-weight:700;">SLA 항목</div>
<div class="t o" style="left:686.80px;top:428.57px;font-size:6.6px;color:#222;transform:scaleX(0.899);--w:12.20;font-weight:700;">URL</div>
<div class="t o" style="left:686.80px;top:438.27px;font-size:6.6px;color:#222;transform:scaleX(1.072);--w:23.20;font-weight:700;">조회 기간</div>
<div class="t o" style="left:724.30px;top:438.27px;font-size:6.4px;color:#333;transform:scaleX(0.916);--w:128.70;">2021-09-17 00:00:00 ~ 2021-09-18 00:00:00 (1일)</div>
<div class="a" style="left:685.40px;top:453.80px;width:271.30px;height:9.70px;background:#d9d9d9;"></div>
<div class="a" style="left:685.40px;top:463.50px;width:271.30px;height:29.70px;background:#fff;"></div>
<div class="t o" style="left:698.00px;top:457.57px;font-size:6.4px;color:#222;transform:scaleX(1.016);--w:13.00;font-weight:700;">SLA</div>
<div class="t o" style="left:732.50px;top:457.57px;font-size:6.4px;color:#222;transform:scaleX(1.096);--w:23.00;font-weight:700;">중단 횟수</div>
<div class="t o" style="left:741.50px;top:476.37px;font-size:6.8px;color:#111;transform:scaleX(1.322);--w:5.00;font-weight:700;">0</div>
<div class="t o" style="left:773.40px;top:457.57px;font-size:6.4px;color:#222;transform:scaleX(1.096);--w:23.00;font-weight:700;">중단 시간</div>
<div class="t o" style="left:779.90px;top:476.37px;font-size:6.8px;color:#111;transform:scaleX(1.126);--w:10.00;font-weight:700;">0초</div>
<div class="t o" style="left:808.05px;top:457.57px;font-size:6.4px;color:#222;transform:scaleX(1.079);--w:33.00;font-weight:700;">일시중단 횟수</div>
<div class="t o" style="left:822.05px;top:476.37px;font-size:6.8px;color:#111;transform:scaleX(1.322);--w:5.00;font-weight:700;">0</div>
<div class="t o" style="left:845.90px;top:457.57px;font-size:6.4px;color:#222;transform:scaleX(1.079);--w:33.00;font-weight:700;">일시중단 시간</div>
<div class="t o" style="left:857.40px;top:476.37px;font-size:6.8px;color:#111;transform:scaleX(1.126);--w:10.00;font-weight:700;">0초</div>
<div class="t o" style="left:890.25px;top:457.57px;font-size:6.4px;color:#222;transform:scaleX(1.069);--w:19.00;font-weight:700;">MTTR</div>
<div class="t o" style="left:894.75px;top:476.37px;font-size:6.8px;color:#111;transform:scaleX(1.126);--w:10.00;font-weight:700;">0초</div>
<div class="t o" style="left:928.55px;top:457.57px;font-size:6.4px;color:#222;transform:scaleX(1.013);--w:18.00;font-weight:700;">MTBF</div>
<div class="t o" style="left:921.05px;top:476.37px;font-size:6.8px;color:#111;transform:scaleX(1.021);--w:33.00;font-weight:700;">14시간 20분</div>
<div class="t o" style="left:688.70px;top:474.57px;font-size:11.2px;color:#111;transform:scaleX(0.826);--w:28.30;font-weight:700;">100.00</div>
<svg class="a" style="left:0;top:0" width="969" height="609"><rect x="684.90" y="453.30" width="1" height="40.40" fill="#3f3f3f"/><rect x="723.10" y="453.30" width="1" height="40.40" fill="#3f3f3f"/><rect x="763.90" y="453.30" width="1" height="40.40" fill="#3f3f3f"/><rect x="804.90" y="453.30" width="1" height="40.40" fill="#3f3f3f"/><rect x="843.20" y="453.30" width="1" height="40.40" fill="#3f3f3f"/><rect x="880.60" y="453.30" width="1" height="40.40" fill="#3f3f3f"/><rect x="917.90" y="453.30" width="1" height="40.40" fill="#3f3f3f"/><rect x="956.20" y="453.30" width="1" height="40.40" fill="#3f3f3f"/><rect x="684.90" y="453.30" width="272.30" height="1" fill="#3f3f3f"/><rect x="684.90" y="463.00" width="272.30" height="1" fill="#3f3f3f"/><rect x="684.90" y="492.70" width="272.30" height="1" fill="#3f3f3f"/></svg>
<div class="a" style="left:685.80px;top:493.60px;width:272.00px;height:9.60px;background:#fff;"></div>
<div class="t o" style="left:686.50px;top:496.42px;font-size:3.6px;color:#aaa;transform:scaleX(1.054);--w:77.50;">*SLA(Service Level Agreement): 서비스 수준 협약</div>
<div class="t o" style="left:770.00px;top:496.42px;font-size:3.6px;color:#aaa;transform:scaleX(1.050);--w:73.00;">**MTTR(Mean Time To Repair): 평균 복구 시간</div>
<div class="t o" style="left:849.00px;top:496.42px;font-size:3.6px;color:#aaa;transform:scaleX(1.010);--w:85.00;">***MTBF(Mean Time Between Failure): 평균 무고장 시간</div>
<div class="a" style="left:685.70px;top:503.60px;width:270.90px;height:85.80px;background:#fff;"></div>
<svg class="a" style="left:0;top:0" width="969" height="609"><rect x="956.3" y="503.6" width="0.7" height="92.79999999999995" fill="#d9d9d9"/><rect x="685.4" y="589.4" width="271.20000000000005" height="0.8" fill="#d9d9d9"/><rect x="696" y="508.65" width="253.6" height="0.7" fill="#e2e2e2"/><rect x="696" y="522.05" width="253.6" height="0.7" fill="#e2e2e2"/><rect x="696" y="535.75" width="253.6" height="0.7" fill="#e2e2e2"/><rect x="696" y="548.9499999999999" width="253.6" height="0.7" fill="#e2e2e2"/><rect x="696" y="562.15" width="253.6" height="0.7" fill="#e2e2e2"/><rect x="696" y="575.35" width="253.6" height="0.7" fill="#e2e2e2"/><path d="M704.60,549.50 L721.60,549.90 L738.50,532.70 L755.50,545.50 L772.30,536.00 L789.20,513.20 L806.00,545.00 L822.80,541.20 L839.60,547.70 L856.50,543.10 L873.40,548.40 L890.10,550.90 L907.20,545.90 L924.50,567.00 L941.70,559.00 L941.7,573.5 L704.6,573.5 Z" fill="#b4c6e7"/><path d="M704.60,549.50 L721.60,549.90 L738.50,532.70 L755.50,545.50 L772.30,536.00 L789.20,513.20 L806.00,545.00 L822.80,541.20 L839.60,547.70 L856.50,543.10 L873.40,548.40 L890.10,550.90 L907.20,545.90 L924.50,567.00 L941.70,559.00" fill="none" stroke="#9db3dc" stroke-width="0.6"/><rect x="696" y="573.3" width="254" height="2.7" fill="#77c148"/></svg>
<div class="t o" style="left:685.90px;top:508.52px;font-size:3.4px;color:#999;transform:scaleX(1.164);--w:6.60;">250</div>
<div class="t o" style="left:685.90px;top:521.92px;font-size:3.4px;color:#999;transform:scaleX(1.164);--w:6.60;">200</div>
<div class="t o" style="left:685.90px;top:535.62px;font-size:3.4px;color:#999;transform:scaleX(1.164);--w:6.60;">150</div>
<div class="t o" style="left:685.90px;top:548.82px;font-size:3.4px;color:#999;transform:scaleX(1.164);--w:6.60;">100</div>
<div class="t o" style="left:688.10px;top:562.02px;font-size:3.4px;color:#999;transform:scaleX(1.164);--w:4.40;">50</div>
<div class="t o" style="left:690.30px;top:575.22px;font-size:3.4px;color:#999;transform:scaleX(1.164);--w:2.20;">0</div>
<div class="t o" style="left:698.60px;top:579.02px;font-size:3.4px;color:#777;transform:scaleX(0.690);--w:12.00;">2021-09-17</div>
<div class="t o" style="left:700.60px;top:582.82px;font-size:3.4px;color:#777;transform:scaleX(0.605);--w:8.00;">00:00:00</div>
<div class="t o" style="left:715.53px;top:579.02px;font-size:3.4px;color:#777;transform:scaleX(0.690);--w:12.00;">2021-09-17</div>
<div class="t o" style="left:717.53px;top:582.82px;font-size:3.4px;color:#777;transform:scaleX(0.605);--w:8.00;">01:00:00</div>
<div class="t o" style="left:732.46px;top:579.02px;font-size:3.4px;color:#777;transform:scaleX(0.690);--w:12.00;">2021-09-17</div>
<div class="t o" style="left:734.46px;top:582.82px;font-size:3.4px;color:#777;transform:scaleX(0.605);--w:8.00;">02:00:00</div>
<div class="t o" style="left:749.39px;top:579.02px;font-size:3.4px;color:#777;transform:scaleX(0.690);--w:12.00;">2021-09-17</div>
<div class="t o" style="left:751.39px;top:582.82px;font-size:3.4px;color:#777;transform:scaleX(0.605);--w:8.00;">03:00:00</div>
<div class="t o" style="left:766.32px;top:579.02px;font-size:3.4px;color:#777;transform:scaleX(0.690);--w:12.00;">2021-09-17</div>
<div class="t o" style="left:768.32px;top:582.82px;font-size:3.4px;color:#777;transform:scaleX(0.605);--w:8.00;">04:00:00</div>
<div class="t o" style="left:783.25px;top:579.02px;font-size:3.4px;color:#777;transform:scaleX(0.690);--w:12.00;">2021-09-17</div>
<div class="t o" style="left:785.25px;top:582.82px;font-size:3.4px;color:#777;transform:scaleX(0.605);--w:8.00;">05:00:00</div>
<div class="t o" style="left:800.18px;top:579.02px;font-size:3.4px;color:#777;transform:scaleX(0.690);--w:12.00;">2021-09-17</div>
<div class="t o" style="left:802.18px;top:582.82px;font-size:3.4px;color:#777;transform:scaleX(0.605);--w:8.00;">06:00:00</div>
<div class="t o" style="left:817.11px;top:579.02px;font-size:3.4px;color:#777;transform:scaleX(0.690);--w:12.00;">2021-09-17</div>
<div class="t o" style="left:819.11px;top:582.82px;font-size:3.4px;color:#777;transform:scaleX(0.605);--w:8.00;">07:00:00</div>
<div class="t o" style="left:834.04px;top:579.02px;font-size:3.4px;color:#777;transform:scaleX(0.690);--w:12.00;">2021-09-17</div>
<div class="t o" style="left:836.04px;top:582.82px;font-size:3.4px;color:#777;transform:scaleX(0.605);--w:8.00;">08:00:00</div>
<div class="t o" style="left:850.97px;top:579.02px;font-size:3.4px;color:#777;transform:scaleX(0.690);--w:12.00;">2021-09-17</div>
<div class="t o" style="left:852.97px;top:582.82px;font-size:3.4px;color:#777;transform:scaleX(0.605);--w:8.00;">09:00:00</div>
<div class="t o" style="left:867.90px;top:579.02px;font-size:3.4px;color:#777;transform:scaleX(0.690);--w:12.00;">2021-09-17</div>
<div class="t o" style="left:869.90px;top:582.82px;font-size:3.4px;color:#777;transform:scaleX(0.605);--w:8.00;">10:00:00</div>
<div class="t o" style="left:884.83px;top:579.02px;font-size:3.4px;color:#777;transform:scaleX(0.690);--w:12.00;">2021-09-17</div>
<div class="t o" style="left:886.83px;top:582.82px;font-size:3.4px;color:#777;transform:scaleX(0.616);--w:8.00;">11:00:00</div>
<div class="t o" style="left:901.76px;top:579.02px;font-size:3.4px;color:#777;transform:scaleX(0.690);--w:12.00;">2021-09-17</div>
<div class="t o" style="left:903.76px;top:582.82px;font-size:3.4px;color:#777;transform:scaleX(0.605);--w:8.00;">12:00:00</div>
<div class="t o" style="left:918.69px;top:579.02px;font-size:3.4px;color:#777;transform:scaleX(0.690);--w:12.00;">2021-09-17</div>
<div class="t o" style="left:920.69px;top:582.82px;font-size:3.4px;color:#777;transform:scaleX(0.605);--w:8.00;">13:00:00</div>
<div class="t o" style="left:935.62px;top:579.02px;font-size:3.4px;color:#777;transform:scaleX(0.690);--w:12.00;">2021-09-17</div>
<div class="t o" style="left:937.62px;top:582.82px;font-size:3.4px;color:#777;transform:scaleX(0.605);--w:8.00;">14:00:00</div>
</div>
<script>
(function(){var els=document.querySelectorAll('.o'),ws=[],i;
for(i=0;i<els.length;i++){var w=parseFloat(els[i].style.getPropertyValue('--w'));ws.push(w);if(w>0){els[i].style.transform='none';}}
var ns=[];for(i=0;i<els.length;i++){ns.push(els[i].getBoundingClientRect().width);}
for(i=0;i<els.length;i++){if(ws[i]>0&&ns[i]>0){els[i].style.transform='scaleX('+(ws[i]/ns[i]).toFixed(4)+')';}}
})();
</script>
</body></html>
